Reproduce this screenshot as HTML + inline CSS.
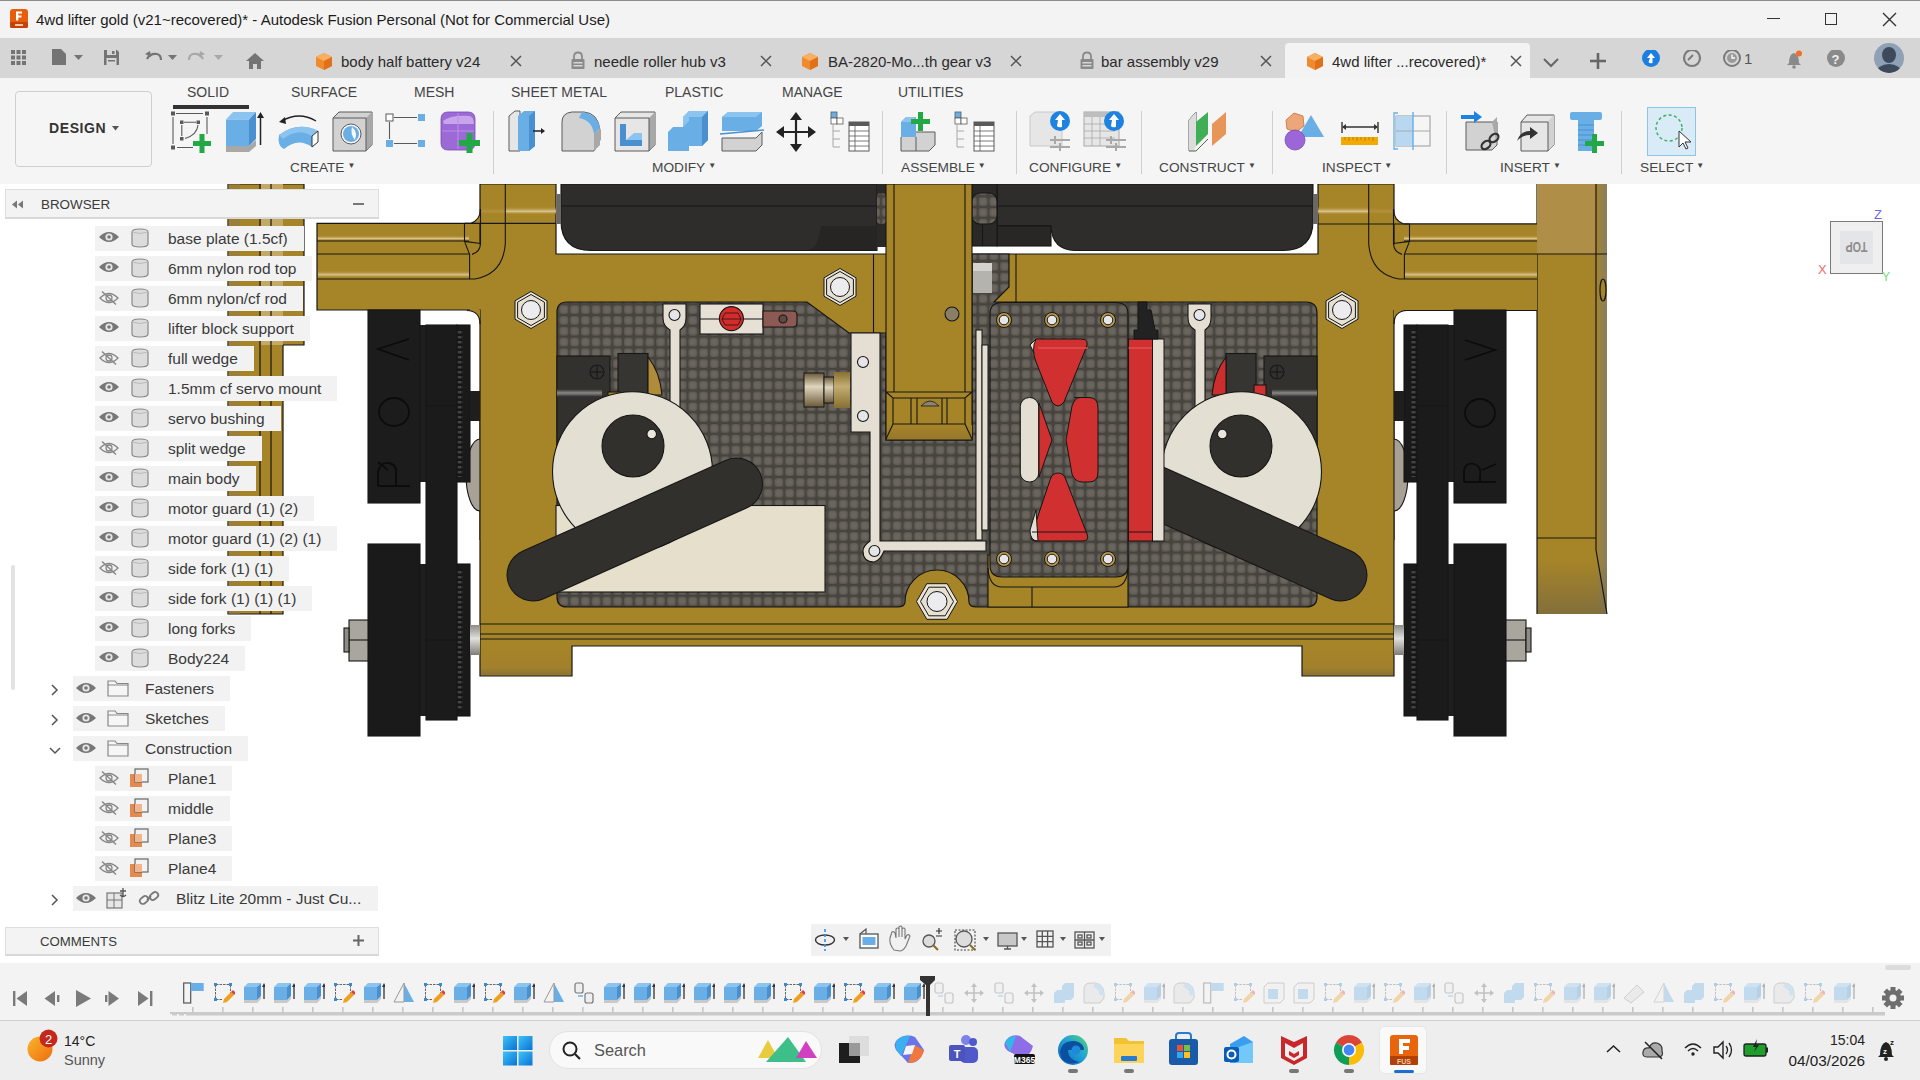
<!DOCTYPE html>
<html><head><meta charset="utf-8">
<style>
*{box-sizing:border-box}
html,body{margin:0;padding:0;width:1920px;height:1080px;overflow:hidden;background:#fff;font-family:"Liberation Sans",sans-serif;color:#333}
.a{position:absolute}
.t{position:absolute;white-space:nowrap;line-height:1}
</style></head><body>
<svg class="a" style="left:0;top:0" width="1920" height="1080" viewBox="0 0 1920 1080">
<defs>
<filter id="cfb" x="0" y="0" width="1" height="1"><feGaussianBlur stdDeviation="0.7"/></filter>
<pattern id="cf" x="10.2" y="1.8" width="10.75" height="10.8" patternUnits="userSpaceOnUse">
<rect width="10.75" height="10.8" fill="#47433e"/>
<rect x="0.9" y="0.9" width="9" height="9" rx="3" fill="#5c5851"/>
<rect x="1.8" y="1.8" width="7.2" height="7.2" rx="2.5" fill="#65615a"/>
<rect x="3" y="3" width="4.8" height="4.8" rx="1.8" fill="#6a665e"/>
</pattern>
<linearGradient id="tubeH" x1="0" y1="0" x2="0" y2="1">
<stop offset="0" stop-color="#a7842a"/><stop offset="0.55" stop-color="#a9872e"/><stop offset="0.8" stop-color="#d2b77a"/><stop offset="0.9" stop-color="#a68329"/><stop offset="1" stop-color="#9e7d27"/>
</linearGradient>
<linearGradient id="hl" x1="0" y1="0" x2="0" y2="1"><stop offset="0" stop-color="#a68428" stop-opacity="0"/><stop offset="0.6" stop-color="#dcc58e"/><stop offset="1" stop-color="#a68428" stop-opacity="0"/></linearGradient>
<linearGradient id="hlg" x1="0" y1="0" x2="0" y2="1"><stop offset="0" stop-color="#2c2b29"/><stop offset="0.5" stop-color="#8a8985"/><stop offset="1" stop-color="#2c2b29"/></linearGradient>
<pattern id="gear" x="0" y="0" width="6" height="5" patternUnits="userSpaceOnUse"><rect width="6" height="5" fill="#161616"/><rect x="0.5" y="1" width="5" height="2.4" fill="#444"/></pattern>
<linearGradient id="boxg" x1="0" y1="0" x2="0" y2="1"><stop offset="0" stop-color="#a68428"/><stop offset="1" stop-color="#96782c"/></linearGradient>
<linearGradient id="rpb" x1="0" y1="0" x2="0" y2="1"><stop offset="0" stop-color="#7a6a40" stop-opacity="0"/><stop offset="1" stop-color="#7a6a40" stop-opacity="0.8"/></linearGradient>
<linearGradient id="tubeV" x1="0" y1="0" x2="1" y2="0">
<stop offset="0" stop-color="#a4822a"/><stop offset="1" stop-color="#a68428"/>
</linearGradient>
<linearGradient id="footG" x1="0" y1="0" x2="0" y2="1">
<stop offset="0" stop-color="#a68428"/><stop offset="0.75" stop-color="#a2812b"/><stop offset="1" stop-color="#8b7236"/>
</linearGradient>
<linearGradient id="shaft" x1="0" y1="0" x2="0" y2="1">
<stop offset="0" stop-color="#8d8b86"/><stop offset="0.45" stop-color="#e0e0dc"/><stop offset="1" stop-color="#7f7d78"/>
</linearGradient>
<linearGradient id="rpanel" x1="0" y1="0" x2="1" y2="0">
<stop offset="0" stop-color="#a68428"/><stop offset="0.84" stop-color="#a68428"/><stop offset="0.86" stop-color="#a08434"/><stop offset="1" stop-color="#8c7d60"/>
</linearGradient>
<linearGradient id="pulley" x1="0" y1="0" x2="0" y2="1">
<stop offset="0" stop-color="#6b5a3a"/><stop offset="0.4" stop-color="#e0d6bd"/><stop offset="1" stop-color="#6b5a3a"/>
</linearGradient>
</defs>
<g stroke="#161616" stroke-width="1.2">
<!-- far left panel (under browser) -->
<path d="M228 184 H304 V345 H283 V614 H228 Z" fill="#a68428"/><rect x="261" y="184" width="22" height="161" fill="#c4a866" stroke="none"/><rect x="228" y="184" width="12" height="430" fill="#8f7a48" stroke="none" opacity="0.5"/>
<line x1="260" y1="184" x2="260" y2="614"/><line x1="271" y1="184" x2="271" y2="614"/>
<!-- left horizontal bar -->
<path d="M470.5 223.4 H317 V310 H470.5" fill="#a68428"/><rect x="470" y="223.4" width="14" height="87" fill="#a68428" stroke="none"/>
<rect x="318" y="235" width="151" height="6" fill="url(#hl)" stroke="none"/>
<rect x="318" y="270" width="151" height="8" fill="url(#hl)" stroke="none"/>
<line x1="317" y1="241" x2="469" y2="241"/><line x1="317" y1="254" x2="469" y2="254"/>
<!-- far right panel -->
<rect x="1537" y="184" width="70" height="430" fill="url(#rpanel)" stroke="none"/><rect x="1537" y="560" width="70" height="54" fill="url(#rpb)" stroke="none"/><path d="M1537 184 V614" fill="none"/>
<rect x="1537" y="184" width="59" height="70" fill="#af8f48" stroke="none"/>
<path d="M1596 184 V550 L1607 614 M1537 254 H1607 M1537 538 H1596" fill="none"/>
<ellipse cx="1603" cy="290" rx="3" ry="11" fill="#a68428"/>
<!-- right horizontal bar -->
<path d="M1537 224 H1403.5 M1403.5 310.5 H1537" fill="#a68428"/><rect x="1403.5" y="224" width="133.5" height="86.5" fill="#a68428" stroke="none"/><path d="M1403.5 224 H1537 M1403.5 310.5 H1537" fill="none"/><rect x="1390" y="224" width="14" height="87" fill="#a68428" stroke="none"/>
<rect x="1404" y="235" width="133" height="6" fill="url(#hl)" stroke="none"/>
<rect x="1404" y="270" width="133" height="8" fill="url(#hl)" stroke="none"/>
<line x1="1404" y1="241" x2="1537" y2="241"/><line x1="1404" y1="254" x2="1537" y2="254"/>
</g>
<!-- main frame body -->
<g stroke="#161616" stroke-width="1.2">
<path d="M480 184 H556 V254 H1318 V184 H1394 V676 H1302 V646 H572 V676 H480 Z" fill="#a68428"/>
</g>
<!-- inner carbon area -->
<path d="M567 302 H807 L849 333 H886 V440 H972 V254 H1009 V287 L994 302 H1306 Q1317 302 1317 313 V597 Q1317 607 1306 607 H977 Q969 607 969 602 A32 32 0 0 0 905 602 Q905 607 897 607 H567 Q557 607 557 597 V312 Q557 302 567 302 Z" fill="url(#cf)" stroke="#161616" stroke-width="1.2"/>
<path d="M466 310 H480 V324 Q480 310 466 310 Z" fill="#a68428"/>
<path d="M1408 310 H1394 V324 Q1394 310 1408 310 Z" fill="#a68428"/>
<path d="M480 324 Q480 311 467 310.5" fill="none" stroke="#161616" stroke-width="1.1"/>
<path d="M1394 324 Q1394 311 1407 310.5" fill="none" stroke="#161616" stroke-width="1.1"/>
<!-- top tubes -->
<g id="ltube" stroke="#161616" stroke-width="1.1">
<rect x="470.2" y="244.5" width="20" height="65" fill="#a68428" stroke="none"/>
<rect x="505" y="206" width="51" height="9" fill="url(#hl)" stroke="none"/><rect x="481" y="206" width="24" height="9" fill="url(#hl)" stroke="none" opacity="0.2"/>
<path d="M470.5 223.4 Q480.5 220 480.5 209 V223.4 Z" fill="#a68428" stroke="none"/>
<path d="M470.5 223.4 Q480.5 220 480.5 209" fill="none"/>
<path d="M505.3 184 V244 Q503 274 475 279 M464.5 223.4 H556 M480.5 209 V244 Q480 252 472 254.4 M464.5 223.4 V241.4 L480.5 243.5 M464.5 241.4 L469.6 254.4 V279 M317 279 H475" fill="none"/>
</g>
<g transform="translate(1874 0) scale(-1 1)" stroke="#161616" stroke-width="1.1">
<rect x="470.2" y="244.5" width="20" height="65.5" fill="#a68428" stroke="none"/>
<rect x="505" y="206" width="51" height="9" fill="url(#hl)" stroke="none"/><rect x="481" y="206" width="24" height="9" fill="url(#hl)" stroke="none" opacity="0.2"/>
<path d="M470.5 224 Q480.5 220 480.5 209 V224 Z" fill="#a68428" stroke="none"/>
<path d="M470.5 224 Q480.5 220 480.5 209" fill="none"/>
<path d="M505.3 184 V244 Q503 274 475 279 M464.5 224 H556 M480.5 209 V244 Q480 252 472 254.4 M464.5 224 V241.4 L480.5 243.5 M464.5 241.4 L469.6 254.4 V279 M337 279 H475" fill="none"/>
</g>
<!-- bottom bar lines -->
<g stroke="#161616" stroke-width="1.1">
<line x1="480" y1="624" x2="1394" y2="624"/>
<line x1="480" y1="634" x2="1394" y2="634"/>
<line x1="480" y1="639" x2="1394" y2="639"/>
</g>
<rect x="481" y="647" width="90" height="28" fill="url(#footG)"/>
<rect x="1303" y="647" width="90" height="28" fill="url(#footG)"/>
<!-- motors -->
<g stroke="#161616" stroke-width="1.1">
<path d="M561 184 H877 V250.5 H591 Q561 250.5 561 220.5 Z" fill="#2f2d2b"/><rect x="556.5" y="194" width="4.5" height="30" fill="#6a6865" stroke="none"/>
<line x1="561" y1="206" x2="877" y2="206"/>
<path d="M821 226 H877 V250 H808 Q818 248 821 226 Z" fill="#262523" stroke="none"/>
<path d="M997 184 H1313 V220.5 Q1313 250.5 1283 250.5 H1075 Q1052 250 1051 226 H997 Z" fill="#2f2d2b"/><rect x="997" y="226" width="54" height="20" fill="#282725"/><rect x="1313" y="194" width="4.5" height="30" fill="#6a6865" stroke="none"/>
<line x1="997" y1="206" x2="1313" y2="206"/>

<rect x="877" y="184" width="9" height="63" fill="#2a2927" stroke="none"/><rect x="877" y="193" width="9" height="31" rx="4" fill="url(#cf)" stroke="none"/>
<rect x="972" y="184" width="25" height="62" fill="#2a2927"/><line x1="982.5" y1="224" x2="982.5" y2="246"/><rect x="972" y="193" width="25" height="31" rx="8" fill="url(#cf)"/><rect x="973" y="263" width="19" height="30" fill="#b5b3ae" stroke="none"/><rect x="973" y="263" width="19" height="8" fill="#d4d2cd" stroke="none"/>
</g>
<line x1="873.5" y1="254" x2="873.5" y2="333" stroke="#161616" stroke-width="1.1"/><line x1="1016" y1="254" x2="1016" y2="302" stroke="#161616" stroke-width="1.1"/>
<!-- center column -->
<g stroke="#161616" stroke-width="1.1">
<rect x="886" y="184" width="86" height="256" fill="#a68428"/>
<line x1="894" y1="184" x2="894" y2="392"/><line x1="965" y1="184" x2="965" y2="392"/>
<rect x="887" y="425" width="85" height="14" fill="url(#boxg)" stroke="none"/>
<path d="M886 392 H972 M886 392 L893 398 H965 L972 392 M893 398 V424 H965 V398 M893 424 L886 439 M965 424 L972 439 M911 398 V424 M917 398 V424 M942 398 V424 M947 398 V424" fill="none"/>
<path d="M921 406 Q930 396 939 406 Z" fill="#8d8372" stroke-width="0.8"/>
<circle cx="952" cy="314" r="7" fill="#8a7f66"/>
</g>
<!-- hex nuts -->
<g stroke="#161616" stroke-width="1"><path d="M531.0,291.5 L547.0,300.8 L547.0,319.2 L531.0,328.5 L515.0,319.2 L515.0,300.8 Z" fill="#e9e4d6"/>
<path d="M531.0,294.5 L544.4,302.2 L544.4,317.8 L531.0,325.5 L517.6,317.8 L517.6,302.2 Z" fill="#e6e1d3"/>
<circle cx="531" cy="310" r="9.5" fill="#ececef"/>
<path d="M840.0,268.5 L856.0,277.8 L856.0,296.2 L840.0,305.5 L824.0,296.2 L824.0,277.8 Z" fill="#e9e4d6"/>
<path d="M840.0,271.5 L853.4,279.2 L853.4,294.8 L840.0,302.5 L826.6,294.8 L826.6,279.2 Z" fill="#e6e1d3"/>
<circle cx="840" cy="287" r="9.5" fill="#ececef"/>
<path d="M1342.0,291.5 L1358.0,300.8 L1358.0,319.2 L1342.0,328.5 L1326.0,319.2 L1326.0,300.8 Z" fill="#e9e4d6"/>
<path d="M1342.0,294.5 L1355.4,302.2 L1355.4,317.8 L1342.0,325.5 L1328.6,317.8 L1328.6,302.2 Z" fill="#e6e1d3"/>
<circle cx="1342" cy="310" r="9.5" fill="#ececef"/>
<path d="M957.5,601.5 L947.2,619.3 L926.8,619.3 L916.5,601.5 L926.8,583.7 L947.2,583.7 Z" fill="#e9e4d6"/>
<path d="M953.5,601.5 L945.2,615.8 L928.8,615.8 L920.5,601.5 L928.8,587.2 L945.2,587.2 Z" fill="#e6e1d3"/>
<circle cx="937" cy="601.5" r="10" fill="#ececef"/></g><g stroke="#161616" stroke-width="1.1">
<!-- left wheels -->
<rect x="420" y="325" width="6" height="157" fill="#1e1e1e" stroke="none"/>
<rect x="420" y="564" width="6" height="152" fill="#1e1e1e" stroke="none"/>
<ellipse cx="480" cy="475" rx="14" ry="36" fill="#a7a295"/>
<rect x="457" y="325" width="13" height="157" fill="#1a1a1a"/>
<rect x="457" y="564" width="13" height="152" fill="#1a1a1a"/>
<rect x="457.5" y="330" width="5" height="147" fill="url(#gear)" stroke="none"/>
<rect x="457.5" y="569" width="5" height="142" fill="url(#gear)" stroke="none"/>
<rect x="426" y="325" width="31" height="395" fill="#1b1b1b"/>
<line x1="426" y1="406" x2="457" y2="406"/><line x1="426" y1="640" x2="457" y2="640"/>
<rect x="368" y="310" width="52" height="193" fill="#1c1c1c"/>
<rect x="368" y="544" width="52" height="192" fill="#1a1a1a"/>
<rect x="470" y="625" width="10" height="30" fill="url(#shaft)" stroke="none"/><rect x="470" y="391" width="10" height="30" fill="#1e1e1e" stroke="none"/>
<rect x="349" y="620" width="19" height="41" fill="#a9a69d"/>
<line x1="349" y1="640" x2="368" y2="640"/>
<rect x="344" y="628" width="5" height="24" fill="#8f8c86"/>

<!-- right wheels -->
<rect x="1448" y="325" width="6" height="157" fill="#1e1e1e" stroke="none"/>
<rect x="1448" y="564" width="6" height="152" fill="#1e1e1e" stroke="none"/>
<ellipse cx="1394" cy="475" rx="14" ry="36" fill="#a7a295"/>
<rect x="1404" y="325" width="13" height="157" fill="#1a1a1a"/>
<rect x="1404" y="564" width="13" height="152" fill="#1a1a1a"/>
<rect x="1411.5" y="330" width="5" height="147" fill="url(#gear)" stroke="none"/>
<rect x="1411.5" y="569" width="5" height="142" fill="url(#gear)" stroke="none"/>
<rect x="1417" y="325" width="31" height="395" fill="#1b1b1b"/>
<line x1="1417" y1="406" x2="1448" y2="406"/><line x1="1417" y1="640" x2="1448" y2="640"/>
<rect x="1454" y="310" width="52" height="193" fill="#1c1c1c"/>
<rect x="1454" y="544" width="52" height="192" fill="#1a1a1a"/>
<rect x="1394" y="625" width="10" height="30" fill="url(#shaft)" stroke="none"/><rect x="1394" y="391" width="10" height="30" fill="#1e1e1e" stroke="none"/>
<rect x="1506" y="620" width="20" height="41" fill="#a9a69d"/>
<line x1="1506" y1="640" x2="1526" y2="640"/>
<rect x="1526" y="628" width="5" height="24" fill="#8f8c86"/>
</g>
<g fill="none" stroke="#0c0c0c" stroke-width="1.8">
<path d="M409 339 L378 349 L409 360"/><ellipse cx="394" cy="412" rx="15" ry="14"/><path d="M378 486 H410 M378 486 V472 Q380 462 389 463 Q398 465 396 476 V486 M388 470 L378 462"/>
<path d="M1465 340 L1495 350 L1465 360"/><ellipse cx="1480" cy="413" rx="15" ry="14"/><path d="M1496 482 H1464 M1464 482 V470 Q1466 462 1474 464 Q1482 466 1480 476 V482 M1482 470 L1496 464"/>
</g>
<!-- re-draw gold column edges over discs -->
<g stroke="#161616" stroke-width="1.1">
<rect x="480" y="420" width="20" height="120" fill="#a68428" stroke="none"/>
<line x1="480" y1="420" x2="480" y2="540"/>
<rect x="1374" y="420" width="20" height="120" fill="#a68428" stroke="none"/>
<line x1="1394" y1="420" x2="1394" y2="540"/>
</g>
<!-- servo blocks -->
<g stroke="#161616" stroke-width="1.1">
<rect x="557" y="356" width="53" height="96" fill="#32312e"/>
<rect x="557" y="389" width="45" height="8" fill="url(#hlg)" stroke="none"/>
<circle cx="597" cy="372" r="7" fill="none"/>
<line x1="597" y1="366" x2="597" y2="378"/><line x1="591" y1="372" x2="603" y2="372"/>
<rect x="618" y="353.5" width="30" height="40" fill="#363532"/>
<path d="M648 357 Q660 372 662 395 L648 395 Z" fill="#b08c3a"/>
<rect x="608" y="392" width="12" height="25" fill="#a68428"/>
<rect x="1264" y="356" width="53" height="96" fill="#32312e"/>
<rect x="1272" y="389" width="45" height="8" fill="url(#hlg)" stroke="none"/>
<circle cx="1277" cy="372" r="7" fill="none"/>
<line x1="1277" y1="366" x2="1277" y2="378"/><line x1="1271" y1="372" x2="1283" y2="372"/>
<rect x="1226" y="353.5" width="30" height="40" fill="#363532"/>
<path d="M1226 357 Q1214 372 1212 395 L1226 395 Z" fill="#cc2d2d"/>
<rect x="1254" y="385" width="12" height="25" fill="#d03030"/>
</g>
<!-- servo arms (white thin) -->
<g stroke="#161616" stroke-width="1.1" fill="#e4dfd2">
<path d="M663 304 H686 V318 Q686 326 680 330 V420 H670 V330 Q663 326 663 318 Z"/>
<circle cx="674.5" cy="315" r="5.5" fill="#e6e6ea"/>
<path d="M1188 304 H1211 V318 Q1211 326 1205 330 V420 H1195 V330 Q1188 326 1188 318 Z"/>
<circle cx="1199.5" cy="315" r="5.5" fill="#e6e6ea"/>
</g>
<!-- cream rect left -->
<rect x="556" y="505.5" width="269" height="86.5" fill="#e5dfcc" stroke="#161616" stroke-width="1.1"/>
<!-- cam discs -->
<g stroke="#161616" stroke-width="1.1">
<circle cx="632.5" cy="471.7" r="80" fill="#e3dfd2"/>
<circle cx="633" cy="446" r="31" fill="#31302c"/>
<circle cx="651.7" cy="434" r="4.8" fill="#e9e6dc"/>
<circle cx="1241.5" cy="471.7" r="80" fill="#e3dfd2"/>
<circle cx="1241" cy="446" r="31" fill="#31302c"/>
<circle cx="1222.3" cy="434" r="4.8" fill="#e9e6dc"/>
</g>
<!-- arms -->
<g stroke="#161616" stroke-width="53" stroke-linecap="round">
<line x1="533" y1="575" x2="736.5" y2="484"/>
<line x1="1341" y1="575" x2="1137.5" y2="484"/>
</g>
<g stroke="#31302c" stroke-width="51" stroke-linecap="round">
<line x1="533" y1="575" x2="736.5" y2="484"/>
<line x1="1341" y1="575" x2="1137.5" y2="484"/>
</g>
<!-- red screw block -->
<g stroke="#161616" stroke-width="1.1">
<rect x="700" y="304" width="63" height="30" fill="#e6e1d4"/>
<line x1="700" y1="319" x2="763" y2="319"/>
<path d="M763 311 H793 Q797 311 797 315 V323 Q797 327 793 327 H763 Z" fill="#8c5a52"/>
<circle cx="783" cy="319" r="4" fill="#5d4a45"/>
<circle cx="731.4" cy="318.6" r="12" fill="#d52b2b"/>
<path d="M725 313 H738 L741 319 L738 325 H725 L722 319 Z M722 319 H741" fill="none" stroke-width="0.8"/>
</g>
<!-- pulley -->
<g stroke="#161616" stroke-width="1">
<rect x="804" y="373" width="20" height="34" fill="url(#pulley)"/>
<rect x="824" y="377" width="10" height="26" fill="url(#pulley)"/>
<rect x="834" y="372" width="16" height="36" fill="#a68428" stroke="none"/>
<rect x="834" y="372" width="16" height="36" fill="url(#pulley)" opacity="0.5" stroke="none"/>
</g>
<!-- white L bracket -->
<g stroke="#161616" stroke-width="1.1" fill="#e4dfd2">
<path d="M851 333 H880 V541 H986 V551 H884 Q880 561 874 562 Q863 562 863 551 Q863 546 870 541 V432 H851 Z"/>
<circle cx="863" cy="362" r="5.5" fill="#e6e6ea"/>
<circle cx="863" cy="416" r="5.5" fill="#e6e6ea"/>
<circle cx="874.4" cy="551" r="5.5" fill="#e6e6ea"/>
</g>
<!-- strip left of battery -->
<g stroke="#161616" stroke-width="1" fill="#e4dfd2">
<rect x="976" y="330" width="6" height="210"/>
<rect x="982" y="345" width="6" height="185"/>
</g>
<!-- battery plate -->
<g stroke="#161616" stroke-width="1.1">
<path d="M988 555 H1128 V607 H988 Z" fill="#a68428"/>
<path d="M988 568 Q989 587 1002 587 H1114 Q1127 587 1128 568 M1032 587 V607" fill="none"/>
<path d="M1002 302.5 H1116 Q1128 302.5 1128 314 V565 Q1128 577 1116 577 H1002 Q990 577 990 565 V314 Q990 302.5 1002 302.5 Z" fill="url(#cf)"/>
</g>
<g stroke="#161616" stroke-width="1">
<circle cx="1004" cy="320" r="7.5" fill="#b89a4c"/><circle cx="1004" cy="320" r="4.8" fill="#e6e6ea"/>
<circle cx="1052" cy="320" r="7.5" fill="#b89a4c"/><circle cx="1052" cy="320" r="4.8" fill="#e6e6ea"/>
<circle cx="1108" cy="320" r="7.5" fill="#b89a4c"/><circle cx="1108" cy="320" r="4.8" fill="#e6e6ea"/>
<circle cx="1004" cy="559" r="7.5" fill="#b89a4c"/><circle cx="1004" cy="559" r="4.8" fill="#e6e6ea"/>
<circle cx="1052" cy="559" r="7.5" fill="#b89a4c"/><circle cx="1052" cy="559" r="4.8" fill="#e6e6ea"/>
<circle cx="1108" cy="559" r="7.5" fill="#b89a4c"/><circle cx="1108" cy="559" r="4.8" fill="#e6e6ea"/>
<!-- red shapes -->
<path d="M1036 339 L1030 345 L1036 357 Z" fill="#e4dfd2"/>
<path d="M1036 339 H1081 Q1090 339 1086 348 L1064 402 Q1058 410 1052 402 L1036 362 Q1031 349 1036 339 Z" fill="#d03030"/>
<line x1="1038" y1="348" x2="1088" y2="348" stroke="#e05050" stroke-width="1.5"/>
<rect x="1020.3" y="397.5" width="18.4" height="84.5" rx="9" fill="#e4dfd2"/>
<path d="M1039 403 L1052 440 L1039 477 Z" fill="#d03030"/>
<path d="M1074 397.5 H1089 Q1098 397.5 1098 408 V472 Q1098 482 1089 482 H1082 Q1075 482 1072 474 L1066 440 L1072 406 Q1075 397.5 1080 397.5 Z" fill="#d03030"/>
<path d="M1058 473 Q1064 473 1066 480 L1087 534 Q1090 541 1082 541 H1036 Q1029 541 1032 534 L1050 480 Q1052 473 1058 473 Z" fill="#d03030"/>
<path d="M1036 510 L1030 530 Q1030 541 1038 541 Z" fill="#e4dfd2"/>
<line x1="1032" y1="532" x2="1087" y2="532"/>
<rect x="1128.5" y="339" width="24" height="202" fill="#d03030"/>
<line x1="1128.5" y1="348" x2="1152.5" y2="348" stroke="#e05050" stroke-width="1.5"/>
<line x1="1128.5" y1="532" x2="1152.5" y2="532"/>
<rect x="1152.5" y="339" width="11.5" height="202" fill="#e4dfd2"/>
<path d="M1138 302 H1147 V310 H1151 L1155 330 H1158 V339 H1134 V330 H1138 Z" fill="#222"/>
</g>

</svg>

<div class="a" style="left:0;top:0;width:1920px;height:38px;background:#f3f3f3"></div>
<div class="a" style="left:0;top:0;width:1920px;height:1px;background:#8c8c8c"></div>
<svg class="a" style="left:9px;top:8px" width="20" height="22" viewBox="0 0 20 22">
<rect x="1" y="1" width="18" height="19" rx="3" fill="#e85d0c"/><rect x="1" y="14" width="18" height="6" rx="1.5" fill="#c2440a"/>
<path d="M7 3.5 H13 V5.5 H9.3 V7.5 H12.5 V9.4 H9.3 V12.5 H7 Z" fill="#fff"/>
<rect x="6" y="16" width="8" height="2" fill="#f7c7a0"/></svg>
<div class="t" style="left:36px;top:12px;font-size:15px;color:#1b1b1b;font-weight:normal;letter-spacing:0px;">4wd lifter gold (v21~recovered)* - Autodesk Fusion Personal (Not for Commercial Use)</div>
<div class="a" style="left:1767px;top:18px;width:13px;height:1px;background:#333"></div>
<div class="a" style="left:1825px;top:13px;width:12px;height:12px;border:1.3px solid #333"></div>
<svg class="a" style="left:1882px;top:12px" width="15" height="15" viewBox="0 0 15 15"><path d="M1 1 L14 14 M14 1 L1 14" stroke="#333" stroke-width="1.4"/></svg>
<div class="a" style="left:0;top:38px;width:1920px;height:40px;background:#d6d6d6"></div>
<div class="a" style="left:1285px;top:43px;width:245px;height:35px;background:#f3f3f3;border-radius:4px 4px 0 0"></div>
<svg class="a" style="left:0;top:38px" width="290" height="40" viewBox="0 0 290 40">
<g fill="#747474">
<rect x="11" y="12" width="4" height="4"/><rect x="16.5" y="12" width="4" height="4"/><rect x="22" y="12" width="4" height="4"/>
<rect x="11" y="17.5" width="4" height="4"/><rect x="16.5" y="17.5" width="4" height="4"/><rect x="22" y="17.5" width="4" height="4"/>
<rect x="11" y="23" width="4" height="4"/><rect x="16.5" y="23" width="4" height="4"/><rect x="22" y="23" width="4" height="4"/>
<path d="M52 11 H61 L66 16 V27 H52 Z"/>
<path d="M74 17 H83 L78.5 22 Z"/>
<path d="M104 12 H117 L119 14 V27 H104 Z"/><rect x="107" y="12" width="9" height="5" fill="#d6d6d6"/><rect x="112" y="13" width="2.5" height="3" fill="#747474"/><rect x="106.5" y="20" width="10" height="7" fill="#d6d6d6"/><rect x="108" y="22" width="7" height="1.5" fill="#747474"/>
<path d="M168 17 H177 L172.5 22 Z"/>
<path d="M214 17 H223 L218.5 22 Z" fill="#a8a8a8"/>
<path d="M246 23 L255 15 L264 23 H261 V31 H257 V26 H253 V31 H249 V23 Z"/>
</g>
<path d="M147 21 Q150 15 157 16 Q161 17 161 22" fill="none" stroke="#747474" stroke-width="2.2"/>
<path d="M145 16 L150 13 L151 19 Z" fill="#747474"/>
<path d="M203 21 Q200 15 193 16 Q189 17 189 22" fill="none" stroke="#a8a8a8" stroke-width="2.2"/>
<path d="M205 16 L200 13 L199 19 Z" fill="#a8a8a8"/>
</svg>
<svg class="a" style="left:315px;top:52px" width="18" height="19" viewBox="0 0 18 19">
<path d="M9 1 L17 5 V14 L9 18 L1 14 V5 Z" fill="#f08a2c"/><path d="M9 1 L17 5 L9 9 L1 5 Z" fill="#f7b061"/><path d="M9 9 L17 5 V14 L9 18 Z" fill="#e0701a"/></svg>
<div class="t" style="left:341px;top:54px;font-size:15px;color:#2a2a2a;font-weight:normal;letter-spacing:0px;">body half battery v24</div>
<svg class="a" style="left:510px;top:55px" width="12" height="12" viewBox="0 0 12 12"><path d="M1 1 L11 11 M11 1 L1 11" stroke="#555" stroke-width="1.5"/></svg>
<svg class="a" style="left:570px;top:51px" width="16" height="19" viewBox="0 0 16 19">
<path d="M4 8 V5.5 Q4 1.5 8 1.5 Q12 1.5 12 5.5 V8" fill="none" stroke="#8a8a8a" stroke-width="1.8"/>
<rect x="1.5" y="8" width="13" height="10" rx="1" fill="#8a8a8a"/><rect x="3.5" y="11" width="9" height="1.5" fill="#d6d6d6"/><rect x="3.5" y="14" width="9" height="1.5" fill="#d6d6d6"/></svg>
<div class="t" style="left:594px;top:54px;font-size:15px;color:#2a2a2a;font-weight:normal;letter-spacing:0px;">needle roller hub v3</div>
<svg class="a" style="left:760px;top:55px" width="12" height="12" viewBox="0 0 12 12"><path d="M1 1 L11 11 M11 1 L1 11" stroke="#555" stroke-width="1.5"/></svg>
<svg class="a" style="left:801px;top:52px" width="18" height="19" viewBox="0 0 18 19">
<path d="M9 1 L17 5 V14 L9 18 L1 14 V5 Z" fill="#f08a2c"/><path d="M9 1 L17 5 L9 9 L1 5 Z" fill="#f7b061"/><path d="M9 9 L17 5 V14 L9 18 Z" fill="#e0701a"/></svg>
<div class="t" style="left:828px;top:54px;font-size:15px;color:#2a2a2a;font-weight:normal;letter-spacing:0px;">BA-2820-Mo...th gear v3</div>
<svg class="a" style="left:1010px;top:55px" width="12" height="12" viewBox="0 0 12 12"><path d="M1 1 L11 11 M11 1 L1 11" stroke="#555" stroke-width="1.5"/></svg>
<svg class="a" style="left:1079px;top:51px" width="16" height="19" viewBox="0 0 16 19">
<path d="M4 8 V5.5 Q4 1.5 8 1.5 Q12 1.5 12 5.5 V8" fill="none" stroke="#8a8a8a" stroke-width="1.8"/>
<rect x="1.5" y="8" width="13" height="10" rx="1" fill="#8a8a8a"/><rect x="3.5" y="11" width="9" height="1.5" fill="#d6d6d6"/><rect x="3.5" y="14" width="9" height="1.5" fill="#d6d6d6"/></svg>
<div class="t" style="left:1101px;top:54px;font-size:15px;color:#2a2a2a;font-weight:normal;letter-spacing:0px;">bar assembly v29</div>
<svg class="a" style="left:1260px;top:55px" width="12" height="12" viewBox="0 0 12 12"><path d="M1 1 L11 11 M11 1 L1 11" stroke="#555" stroke-width="1.5"/></svg>
<svg class="a" style="left:1306px;top:52px" width="18" height="19" viewBox="0 0 18 19">
<path d="M9 1 L17 5 V14 L9 18 L1 14 V5 Z" fill="#f08a2c"/><path d="M9 1 L17 5 L9 9 L1 5 Z" fill="#f7b061"/><path d="M9 9 L17 5 V14 L9 18 Z" fill="#e0701a"/></svg>
<div class="t" style="left:1332px;top:54px;font-size:15px;color:#2a2a2a;font-weight:normal;letter-spacing:0px;">4wd lifter ...recovered)*</div>
<svg class="a" style="left:1510px;top:55px" width="12" height="12" viewBox="0 0 12 12"><path d="M1 1 L11 11 M11 1 L1 11" stroke="#555" stroke-width="1.5"/></svg>
<svg class="a" style="left:1540px;top:50px" width="360" height="24" viewBox="0 0 360 24">
<path d="M4 9 L11 16 L18 9" fill="none" stroke="#666" stroke-width="2"/>
<path d="M58 3 V19 M50 11 H66" stroke="#666" stroke-width="2.6"/>
<circle cx="111" cy="8" r="9" fill="#1c7fe0"/><path d="M111 3 L115 8 H112.5 V13 Q110 14 108.5 12 L110 8 H107 Z" fill="#fff"/>
<circle cx="152" cy="8" r="8" fill="none" stroke="#7a7a7a" stroke-width="2.2"/><path d="M148 10 L153 5" stroke="#7a7a7a" stroke-width="2"/>
<circle cx="192" cy="8" r="8" fill="none" stroke="#7a7a7a" stroke-width="2"/><circle cx="192" cy="8" r="5" fill="#9a9a9a"/><path d="M192 4.5 V8 H195" stroke="#fff" stroke-width="1.3" fill="none"/>
<text x="204" y="14" font-family="Liberation Sans" font-size="15" fill="#555">1</text>
<path d="M249 13 Q249 4 254 3 Q259 4 259 13 L261 15 H247 Z" fill="#8a8a8a"/><circle cx="254" cy="17" r="1.8" fill="#8a8a8a"/><circle cx="259" cy="3.5" r="3" fill="#f0702a"/>
<circle cx="296" cy="8" r="9" fill="#8a8a8a"/><text x="291.5" y="13.5" font-family="Liberation Sans" font-size="13" font-weight="bold" fill="#f0f0f0">?</text>
</svg>
<svg class="a" style="left:1873px;top:42px" width="32" height="32" viewBox="0 0 32 32"><defs><clipPath id="av"><circle cx="16" cy="16" r="15"/></clipPath></defs>
<circle cx="16" cy="16" r="15" fill="#8fa1b5"/><g clip-path="url(#av)"><ellipse cx="16" cy="13" rx="7" ry="8" fill="#3c4a5c"/><ellipse cx="16" cy="31" rx="13" ry="9" fill="#3c4a5c"/></g></svg>
<div class="a" style="left:0;top:78px;width:1920px;height:106px;background:#f5f5f5"></div>
<div class="a" style="left:15px;top:91px;width:137px;height:76px;border:1px solid #cfcfcf;border-radius:4px;background:#f5f5f5"></div>
<div class="t" style="left:49px;top:121px;font-size:14px;color:#333;font-weight:bold;letter-spacing:0.6px;">DESIGN</div>
<svg class="a" style="left:112px;top:126px" width="8" height="5" viewBox="0 0 8 5"><path d="M0 0 H7 L3.5 4.5 Z" fill="#555"/></svg>
<div class="t" style="left:187px;top:85px;font-size:14px;color:#444;font-weight:normal;letter-spacing:0px;">SOLID</div>
<div class="t" style="left:291px;top:85px;font-size:14px;color:#444;font-weight:normal;letter-spacing:0px;">SURFACE</div>
<div class="t" style="left:414px;top:85px;font-size:14px;color:#444;font-weight:normal;letter-spacing:0px;">MESH</div>
<div class="t" style="left:511px;top:85px;font-size:14px;color:#444;font-weight:normal;letter-spacing:0px;">SHEET METAL</div>
<div class="t" style="left:665px;top:85px;font-size:14px;color:#444;font-weight:normal;letter-spacing:0px;">PLASTIC</div>
<div class="t" style="left:782px;top:85px;font-size:14px;color:#444;font-weight:normal;letter-spacing:0px;">MANAGE</div>
<div class="t" style="left:898px;top:85px;font-size:14px;color:#444;font-weight:normal;letter-spacing:0px;">UTILITIES</div>
<div class="a" style="left:173px;top:105px;width:76px;height:4px;background:#333"></div>
<div class="t" style="left:290px;top:161px;font-size:13.7px;color:#444;font-weight:normal;letter-spacing:0px;">CREATE<span style="font-size:8px;vertical-align:4px;margin-left:3px">&#9660;</span></div>
<div class="t" style="left:652px;top:161px;font-size:13.7px;color:#444;font-weight:normal;letter-spacing:0px;">MODIFY<span style="font-size:8px;vertical-align:4px;margin-left:3px">&#9660;</span></div>
<div class="t" style="left:901px;top:161px;font-size:13.7px;color:#444;font-weight:normal;letter-spacing:0px;">ASSEMBLE<span style="font-size:8px;vertical-align:4px;margin-left:3px">&#9660;</span></div>
<div class="t" style="left:1029px;top:161px;font-size:13.7px;color:#444;font-weight:normal;letter-spacing:0px;">CONFIGURE<span style="font-size:8px;vertical-align:4px;margin-left:3px">&#9660;</span></div>
<div class="t" style="left:1159px;top:161px;font-size:13.7px;color:#444;font-weight:normal;letter-spacing:0px;">CONSTRUCT<span style="font-size:8px;vertical-align:4px;margin-left:3px">&#9660;</span></div>
<div class="t" style="left:1322px;top:161px;font-size:13.7px;color:#444;font-weight:normal;letter-spacing:0px;">INSPECT<span style="font-size:8px;vertical-align:4px;margin-left:3px">&#9660;</span></div>
<div class="t" style="left:1500px;top:161px;font-size:13.7px;color:#444;font-weight:normal;letter-spacing:0px;">INSERT<span style="font-size:8px;vertical-align:4px;margin-left:3px">&#9660;</span></div>
<div class="t" style="left:1640px;top:161px;font-size:13.7px;color:#444;font-weight:normal;letter-spacing:0px;">SELECT<span style="font-size:8px;vertical-align:4px;margin-left:3px">&#9660;</span></div>
<div class="a" style="left:493px;top:111px;width:1px;height:63px;background:#cfcfcf"></div>
<div class="a" style="left:882px;top:111px;width:1px;height:63px;background:#cfcfcf"></div>
<div class="a" style="left:1016px;top:111px;width:1px;height:63px;background:#cfcfcf"></div>
<div class="a" style="left:1141px;top:111px;width:1px;height:63px;background:#cfcfcf"></div>
<div class="a" style="left:1272px;top:111px;width:1px;height:63px;background:#cfcfcf"></div>
<div class="a" style="left:1446px;top:111px;width:1px;height:63px;background:#cfcfcf"></div>
<div class="a" style="left:1621px;top:111px;width:1px;height:63px;background:#cfcfcf"></div>
<div class="a" style="left:1647px;top:107px;width:49px;height:49px;background:#d9ebf6;border:1px solid #8ec4e6"></div>
<svg class="a" style="left:0;top:100px" width="1920" height="62" viewBox="0 100 1920 62">
<g fill="#5a5a5a"><rect x="171" y="111.5" width="4" height="4"/><rect x="205" y="111.5" width="4" height="4"/><rect x="171" y="145.5" width="4" height="4"/><rect x="180" y="120.5" width="3.5" height="3.5"/><rect x="196.5" y="120.5" width="3.5" height="3.5"/><rect x="180" y="137" width="3.5" height="3.5"/></g><path d="M176 113.5 H203 M173 117 V144 M177 147.5 H193 M207 117 V134 M184 122.3 H196 M181.8 125 V136 M185 138.5 Q197 135 198 125" fill="none" stroke="#5a5a5a" stroke-width="1.1"/><path d="M199.5 134 H204.5 V141 H211 V146 H204.5 V153 H199.5 V146 H193 V141 H199.5 Z" fill="#22a844"/>
<path d="M226 146 H249 L256 140 V146 L249 152 H226 Z" fill="#a8a8a8"/><path d="M226 119.5 L233 112 H256 L249 119.5 Z" fill="#8cc4f0"/><rect x="226" y="119.5" width="23" height="26.5" fill="#6aaee6"/><path d="M249 119.5 L256 112 V139 L249 146 Z" fill="#4a90d0"/><path d="M260.5 145 V116" stroke="#222" stroke-width="1.5"/><path d="M257 118 L260.5 112 L264 118 Z" fill="#222"/>
<path d="M279 135 Q298 121 318 131 V142 L312 147 Q298 137 284 149 Q277 146 279 135 Z" fill="#6aaee6"/><path d="M279 135 Q298 121 318 131 L312 136 Q298 127 283 139 Z" fill="#8cc4f0"/><path d="M312 136 L318 131 V142 L312 147 Z" fill="#fff" stroke="#333" stroke-width="1"/><path d="M316 121 Q299 111 282 121" fill="none" stroke="#222" stroke-width="1.4"/><path d="M279 122 L285 117 L286 124 Z" fill="#222"/>
<path d="M333 151 V118 L339 112 H372 V145 L366 151 Z" fill="#d2d2d2" stroke="#5a5a5a" stroke-width="1"/><path d="M366 118 L372 112 V145 L366 151 Z" fill="#a8a8a8"/><path d="M333 118 H366 V151" fill="none" stroke="#5a5a5a" stroke-width="1"/><circle cx="351" cy="134" r="10" fill="#fafafa" stroke="#5a5a5a" stroke-width="1"/><circle cx="351" cy="134" r="8" fill="#6aaee6"/><path d="M352 127 Q358 132 355 140 Q350 134 352 127 Z" fill="#fafafa"/>
<rect x="386" y="114" width="7" height="7" fill="#fff" stroke="#5a5a5a"/><rect x="418" y="114" width="7" height="7" fill="#6aaee6"/><rect x="386" y="140" width="7" height="7" fill="#6aaee6"/><rect x="418" y="140" width="7" height="7" fill="#6aaee6"/><path d="M394 117.5 H417 M389.5 122 V139 M394 143.5 H417" stroke="#5a5a5a" stroke-width="1.1"/>
<path d="M441 119 Q441 112 448 112 H468 Q475 112 475 119 V143 Q475 150 468 150 H448 Q441 150 441 143 Z" fill="#9c6ad6" stroke="#7a4ab8" stroke-width="0.8"/><path d="M443 121 Q450 115 470 116 Q474 118 474 124 H444 Z" fill="#c8a4ec"/><path d="M458 113 V149 M442 131 H474" stroke="#b890e8" stroke-width="1"/><path d="M466.5 133 H472.5 V140 H480 V146 H472.5 V153 H466.5 V146 H459 V140 H466.5 Z" fill="#22a844"/>
<path d="M509 151 V116 L515 111 H520 V151 Z" fill="#e6e6e6" stroke="#5a5a5a" stroke-width="1"/><path d="M518 151 V116 L524 111 H535 V146 L529 151 Z" fill="#6aaee6"/><path d="M529 116 L535 111 V146 L529 151 Z" fill="#4a90d0"/><path d="M533 131 H542" stroke="#222" stroke-width="1.5"/><path d="M541 128 L545 131 L541 134 Z" fill="#222"/>
<path d="M562 151 V122 Q562 113 572 112 H584 Q598 113 600 130 V140 L594 151 Z" fill="#d2d2d2" stroke="#5a5a5a" stroke-width="1"/><path d="M582 112 Q597 114 600 128 L594 134 Q592 120 579 118 Z" fill="#6aaee6"/><path d="M594 134 V151 L600 145 V128 Z" fill="#a8a8a8"/>
<path d="M615 151 V118 L621 112 H655 V145 L649 151 Z" fill="#e6e6e6" stroke="#5a5a5a" stroke-width="1"/><path d="M649 118 L655 112 V145 L649 151 Z" fill="#a8a8a8"/><path d="M615 118 H649 V151" fill="none" stroke="#5a5a5a"/><path d="M620 124 H626 V140 H642 V146 H620 Z" fill="#4a90d0"/><path d="M626 140 L634 133 H642 V140 Z" fill="#8cc4f0"/>
<path d="M668 151 V132 L673 127 H683 V117 L689 111 H708 V140 L702 146 H689 V151 Z" fill="#6aaee6"/><path d="M683 127 L689 121 V117 L683 117 Z" fill="#8cc4f0"/><path d="M689 111 H708 L702 117 H683 Z" fill="#8cc4f0"/><path d="M702 117 L708 111 V140 L702 146 Z" fill="#4a90d0"/>
<path d="M722 151 V138 H756 L762 132 V145 L756 151 Z" fill="#d2d2d2" stroke="#5a5a5a" stroke-width="1"/><path d="M722 131 V117 L728 112 H762 V126 L756 131 Z" fill="#6aaee6"/><path d="M728 112 H762 L756 117 H722 Z" fill="#8cc4f0"/><path d="M720 134 L764 130" stroke="#4a90d0" stroke-width="1.6"/>
<path d="M796 114 V150 M778 132 H814" stroke="#222" stroke-width="2.2"/><path d="M790 120 L796 112 L802 120 Z M790 144 L796 152 L802 144 Z M784 126 L776 132 L784 138 Z M808 126 L816 132 L808 138 Z" fill="#222"/>
<rect x="831" y="112" width="6" height="6" fill="#6aaee6" stroke="#5a5a5a" stroke-width="0.8"/><rect x="831" y="118" width="6" height="6" fill="#fff" stroke="#5a5a5a" stroke-width="0.8"/><rect x="837" y="118" width="6" height="6" fill="#fff" stroke="#5a5a5a" stroke-width="0.8"/><path d="M833 124 V147 H840 M833 131 H840 M833 139 H840" stroke="#a8a8a8" stroke-width="1" fill="none"/><rect x="849" y="122" width="20" height="29" fill="#fff" stroke="#5a5a5a" stroke-width="1"/><rect x="849" y="122" width="20" height="4" fill="#5a5a5a"/><path d="M849 131 H869 M849 136 H869 M849 141 H869 M849 146 H869 M855 126 V151" stroke="#5a5a5a" stroke-width="0.8"/>
<path d="M901 151 V137 L906 132 H935 V145 L929 151 Z" fill="#d2d2d2" stroke="#5a5a5a" stroke-width="1"/><path d="M916 137 V151" stroke="#5a5a5a"/><path d="M901 137 V122 L906 117 H916 V137 Z" fill="#6aaee6"/><path d="M906 117 H916 L911 122 H901 Z" fill="#8cc4f0"/><path d="M918 112 H923 V119 H930 V124 H923 V131 H918 V124 H911 V119 H918 Z" fill="#22a844"/>
<rect x="955" y="112" width="6" height="6" fill="#6aaee6" stroke="#5a5a5a" stroke-width="0.8"/><rect x="955" y="118" width="6" height="6" fill="#fff" stroke="#5a5a5a" stroke-width="0.8"/><rect x="961" y="118" width="6" height="6" fill="#fff" stroke="#5a5a5a" stroke-width="0.8"/><path d="M957 124 V147 H964 M957 131 H964 M957 139 H964" stroke="#a8a8a8" stroke-width="1" fill="none"/><rect x="974" y="122" width="20" height="29" fill="#fff" stroke="#5a5a5a" stroke-width="1"/><rect x="974" y="122" width="20" height="4" fill="#5a5a5a"/><path d="M974 131 H994 M974 136 H994 M974 141 H994 M974 146 H994 M980 126 V151" stroke="#5a5a5a" stroke-width="0.8"/>
<path d="M1030 146 V116 L1035 112 H1062 V146 Z" fill="#e6e6e6" stroke="#c8c8c8" stroke-width="1"/><path d="M1050 140 H1070 M1050 147 H1070 M1055 136 V144 M1060 143 V151" stroke="#a8a8a8" stroke-width="2"/><circle cx="1060" cy="121" r="10" fill="#1d82e0"/><path d="M1060 114 L1065 120 H1062 V127 Q1058 128 1057 126 L1058 120 H1055 Z" fill="#fff"/>
<rect x="1084" y="112" width="35" height="34" fill="#e6e6e6" stroke="#a8a8a8" stroke-width="1"/><rect x="1084" y="112" width="35" height="5" fill="#bdbdbd"/><path d="M1084 124 H1115 M1084 131 H1115 M1084 138 H1115 M1092 117 V146 M1100 117 V146" stroke="#a8a8a8" stroke-width="0.8"/><path d="M1106 140 H1126 M1106 147 H1126 M1111 136 V144 M1116 143 V151" stroke="#a8a8a8" stroke-width="2"/><circle cx="1114" cy="121" r="10" fill="#1d82e0"/><path d="M1114 114 L1119 120 H1116 V127 Q1112 128 1111 126 L1112 120 H1109 Z" fill="#fff"/>
<path d="M1189 151 V120 L1196 112 V144 Z" fill="#e6e6e6" stroke="#5a5a5a" stroke-width="1"/><path d="M1189 120 V151 H1194 L1196 146 V112 Z" fill="#dcdcdc"/><path d="M1196 146 L1208 134 V112 L1196 122 Z" fill="#3fae56"/><path d="M1212 146 L1226 134 V112 L1212 124 Z" fill="#e8955a"/><path d="M1189 151 H1196 L1208 139" stroke="#5a5a5a" fill="none"/>
<path d="M1286 120 L1294 113 L1303 116 L1304 126 L1296 132 L1287 129 Z" fill="#eca678" stroke="#c07040" stroke-width="0.8"/><path d="M1311 115 L1324 137 H1298 Z" fill="#6aaee6"/><circle cx="1295" cy="140" r="10" fill="#9c66d9" stroke="#7a4ab8" stroke-width="0.8"/>
<path d="M1343 127 H1377 M1342 122 V133 M1378 122 V133" stroke="#333" stroke-width="1.4"/><path d="M1346 124 L1342 127 L1346 130 Z M1374 124 L1378 127 L1374 130 Z" fill="#333"/><rect x="1341" y="137" width="37" height="8" fill="#f2aa00"/><path d="M1345 137 V140 M1349 137 V141 M1353 137 V140 M1357 137 V141 M1361 137 V140 M1365 137 V141 M1369 137 V140 M1373 137 V141" stroke="#c07d00" stroke-width="1"/>
<rect x="1396" y="116" width="34" height="30" fill="none" stroke="#a8a8a8" stroke-width="1.2"/><rect x="1396" y="116" width="17" height="30" fill="#b8d8f2"/><path d="M1396 131 H1430" stroke="#a8a8a8"/><path d="M1413 112 V150" stroke="#6aaee6" stroke-width="1.4"/><path d="M1398 113 H1394 V149 H1398" fill="none" stroke="#6aaee6" stroke-width="1.3"/>
<path d="M1466 150 V122 H1497 V145 L1492 150 Z" fill="#d2d2d2" stroke="#5a5a5a" stroke-width="1"/><path d="M1492 122 L1497 117 V145 Z" fill="#a8a8a8"/><path d="M1461 117 H1475" stroke="#1d82e0" stroke-width="4"/><path d="M1474 111 L1482 117 L1474 123 Z" fill="#1d82e0"/><g fill="none" stroke="#333" stroke-width="2.2"><ellipse cx="1486" cy="145" rx="5" ry="3.5" transform="rotate(-40 1486 145)"/><ellipse cx="1494" cy="138" rx="5" ry="3.5" transform="rotate(-40 1494 138)"/></g>
<path d="M1521 151 V122 L1527 115 H1554 V145 L1548 151 Z" fill="#e6e6e6" stroke="#5a5a5a" stroke-width="1"/><path d="M1548 121 L1554 115 V145 L1548 151 Z" fill="#d2d2d2"/><path d="M1521 122 H1548 V151" stroke="#5a5a5a" fill="none"/><path d="M1517 141 Q1520 131 1530 131 V127 L1538 133 L1530 139 V135 Q1522 135 1517 141 Z" fill="#333"/>
<rect x="1570" y="112" width="32" height="8" rx="2" fill="#6aaee6"/><rect x="1578" y="120" width="16" height="31" fill="#6aaee6"/><path d="M1578 125 H1594 M1578 130 H1594 M1578 135 H1594 M1578 140 H1594 M1578 145 H1594" stroke="#4a90d0" stroke-width="1"/><path d="M1592 134 H1597 V141 H1604 V146 H1597 V153 H1592 V146 H1585 V141 H1592 Z" fill="#22a844"/>
<circle cx="1669" cy="128" r="13" fill="none" stroke="#3aae5a" stroke-width="1.4" stroke-dasharray="3 2.5"/><path d="M1679 131 V147 L1683 143 L1686 149 L1688 148 L1685 142 H1691 Z" fill="#fff" stroke="#333" stroke-width="1"/>
</svg>
<div class="a" style="left:5px;top:189px;width:374px;height:30px;background:#f3f3f3;border:1px solid #dedede;border-bottom:2px solid #d8d8d8"></div>
<svg class="a" style="left:12px;top:200px" width="12" height="9" viewBox="0 0 12 9"><path d="M0 4.5 L5 0.5 V8.5 Z M6 4.5 L11 0.5 V8.5 Z" fill="#777"/></svg>
<div class="t" style="left:41px;top:198px;font-size:13.4px;color:#3a3a3a;font-weight:normal;letter-spacing:0px;">BROWSER</div>
<div class="a" style="left:353px;top:203px;width:11px;height:2px;background:#777"></div>
<div class="a" style="left:5px;top:927px;width:374px;height:29px;background:#f3f3f3;border:1px solid #dedede;border-bottom:2px solid #d8d8d8"></div>
<div class="t" style="left:40px;top:935px;font-size:13.2px;color:#3a3a3a;font-weight:normal;letter-spacing:0px;">COMMENTS</div>
<svg class="a" style="left:353px;top:935px" width="11" height="11" viewBox="0 0 11 11"><path d="M5.5 0 V11 M0 5.5 H11" stroke="#666" stroke-width="2"/></svg>
<div class="a" style="left:95px;top:226px;height:25px;padding:0 16px 0 73px;background:#f2f2f2"><span style="font-size:15.5px;line-height:25px;color:#3a3a3a;white-space:nowrap">base plate (1.5cf)</span></div>
<div class="a" style="left:98px;top:230px"><svg width="22" height="14" viewBox="0 0 22 14"><path d="M1 7 Q11 -3 21 7 Q11 17 1 7 Z" fill="#777"/><circle cx="11" cy="7" r="3.6" fill="#e8e8e8"/><circle cx="11" cy="7" r="1.8" fill="#777"/></svg></div>
<div class="a" style="left:131px;top:228px"><svg width="18" height="20" viewBox="0 0 18 20"><path d="M1 4 Q1 1 9 1 Q17 1 17 4 V16 Q17 19 9 19 Q1 19 1 16 Z" fill="#dcdcdc" stroke="#888" stroke-width="1.2"/><path d="M1 4 Q9 7 17 4" fill="none" stroke="#bbb" stroke-width="1"/></svg></div>
<div class="a" style="left:95px;top:256px;height:25px;padding:0 16px 0 73px;background:#f2f2f2"><span style="font-size:15.5px;line-height:25px;color:#3a3a3a;white-space:nowrap">6mm nylon rod top</span></div>
<div class="a" style="left:98px;top:260px"><svg width="22" height="14" viewBox="0 0 22 14"><path d="M1 7 Q11 -3 21 7 Q11 17 1 7 Z" fill="#777"/><circle cx="11" cy="7" r="3.6" fill="#e8e8e8"/><circle cx="11" cy="7" r="1.8" fill="#777"/></svg></div>
<div class="a" style="left:131px;top:258px"><svg width="18" height="20" viewBox="0 0 18 20"><path d="M1 4 Q1 1 9 1 Q17 1 17 4 V16 Q17 19 9 19 Q1 19 1 16 Z" fill="#dcdcdc" stroke="#888" stroke-width="1.2"/><path d="M1 4 Q9 7 17 4" fill="none" stroke="#bbb" stroke-width="1"/></svg></div>
<div class="a" style="left:95px;top:286px;height:25px;padding:0 16px 0 73px;background:#f2f2f2"><span style="font-size:15.5px;line-height:25px;color:#3a3a3a;white-space:nowrap">6mm nylon/cf rod</span></div>
<div class="a" style="left:98px;top:290px"><svg width="22" height="16" viewBox="0 0 22 16"><path d="M2 8 Q11 -1 20 8 Q11 17 2 8 Z" fill="none" stroke="#888" stroke-width="1.4"/><circle cx="11" cy="8" r="3" fill="none" stroke="#888" stroke-width="1.3"/><path d="M4 1.5 L18 14.5" stroke="#888" stroke-width="1.5"/></svg></div>
<div class="a" style="left:131px;top:288px"><svg width="18" height="20" viewBox="0 0 18 20"><path d="M1 4 Q1 1 9 1 Q17 1 17 4 V16 Q17 19 9 19 Q1 19 1 16 Z" fill="#dcdcdc" stroke="#888" stroke-width="1.2"/><path d="M1 4 Q9 7 17 4" fill="none" stroke="#bbb" stroke-width="1"/></svg></div>
<div class="a" style="left:95px;top:316px;height:25px;padding:0 16px 0 73px;background:#f2f2f2"><span style="font-size:15.5px;line-height:25px;color:#3a3a3a;white-space:nowrap">lifter block support</span></div>
<div class="a" style="left:98px;top:320px"><svg width="22" height="14" viewBox="0 0 22 14"><path d="M1 7 Q11 -3 21 7 Q11 17 1 7 Z" fill="#777"/><circle cx="11" cy="7" r="3.6" fill="#e8e8e8"/><circle cx="11" cy="7" r="1.8" fill="#777"/></svg></div>
<div class="a" style="left:131px;top:318px"><svg width="18" height="20" viewBox="0 0 18 20"><path d="M1 4 Q1 1 9 1 Q17 1 17 4 V16 Q17 19 9 19 Q1 19 1 16 Z" fill="#dcdcdc" stroke="#888" stroke-width="1.2"/><path d="M1 4 Q9 7 17 4" fill="none" stroke="#bbb" stroke-width="1"/></svg></div>
<div class="a" style="left:95px;top:346px;height:25px;padding:0 16px 0 73px;background:#f2f2f2"><span style="font-size:15.5px;line-height:25px;color:#3a3a3a;white-space:nowrap">full wedge</span></div>
<div class="a" style="left:98px;top:350px"><svg width="22" height="16" viewBox="0 0 22 16"><path d="M2 8 Q11 -1 20 8 Q11 17 2 8 Z" fill="none" stroke="#888" stroke-width="1.4"/><circle cx="11" cy="8" r="3" fill="none" stroke="#888" stroke-width="1.3"/><path d="M4 1.5 L18 14.5" stroke="#888" stroke-width="1.5"/></svg></div>
<div class="a" style="left:131px;top:348px"><svg width="18" height="20" viewBox="0 0 18 20"><path d="M1 4 Q1 1 9 1 Q17 1 17 4 V16 Q17 19 9 19 Q1 19 1 16 Z" fill="#dcdcdc" stroke="#888" stroke-width="1.2"/><path d="M1 4 Q9 7 17 4" fill="none" stroke="#bbb" stroke-width="1"/></svg></div>
<div class="a" style="left:95px;top:376px;height:25px;padding:0 16px 0 73px;background:#f2f2f2"><span style="font-size:15.5px;line-height:25px;color:#3a3a3a;white-space:nowrap">1.5mm cf servo mount</span></div>
<div class="a" style="left:98px;top:380px"><svg width="22" height="14" viewBox="0 0 22 14"><path d="M1 7 Q11 -3 21 7 Q11 17 1 7 Z" fill="#777"/><circle cx="11" cy="7" r="3.6" fill="#e8e8e8"/><circle cx="11" cy="7" r="1.8" fill="#777"/></svg></div>
<div class="a" style="left:131px;top:378px"><svg width="18" height="20" viewBox="0 0 18 20"><path d="M1 4 Q1 1 9 1 Q17 1 17 4 V16 Q17 19 9 19 Q1 19 1 16 Z" fill="#dcdcdc" stroke="#888" stroke-width="1.2"/><path d="M1 4 Q9 7 17 4" fill="none" stroke="#bbb" stroke-width="1"/></svg></div>
<div class="a" style="left:95px;top:406px;height:25px;padding:0 16px 0 73px;background:#f2f2f2"><span style="font-size:15.5px;line-height:25px;color:#3a3a3a;white-space:nowrap">servo bushing</span></div>
<div class="a" style="left:98px;top:410px"><svg width="22" height="14" viewBox="0 0 22 14"><path d="M1 7 Q11 -3 21 7 Q11 17 1 7 Z" fill="#777"/><circle cx="11" cy="7" r="3.6" fill="#e8e8e8"/><circle cx="11" cy="7" r="1.8" fill="#777"/></svg></div>
<div class="a" style="left:131px;top:408px"><svg width="18" height="20" viewBox="0 0 18 20"><path d="M1 4 Q1 1 9 1 Q17 1 17 4 V16 Q17 19 9 19 Q1 19 1 16 Z" fill="#dcdcdc" stroke="#888" stroke-width="1.2"/><path d="M1 4 Q9 7 17 4" fill="none" stroke="#bbb" stroke-width="1"/></svg></div>
<div class="a" style="left:95px;top:436px;height:25px;padding:0 16px 0 73px;background:#f2f2f2"><span style="font-size:15.5px;line-height:25px;color:#3a3a3a;white-space:nowrap">split wedge</span></div>
<div class="a" style="left:98px;top:440px"><svg width="22" height="16" viewBox="0 0 22 16"><path d="M2 8 Q11 -1 20 8 Q11 17 2 8 Z" fill="none" stroke="#888" stroke-width="1.4"/><circle cx="11" cy="8" r="3" fill="none" stroke="#888" stroke-width="1.3"/><path d="M4 1.5 L18 14.5" stroke="#888" stroke-width="1.5"/></svg></div>
<div class="a" style="left:131px;top:438px"><svg width="18" height="20" viewBox="0 0 18 20"><path d="M1 4 Q1 1 9 1 Q17 1 17 4 V16 Q17 19 9 19 Q1 19 1 16 Z" fill="#dcdcdc" stroke="#888" stroke-width="1.2"/><path d="M1 4 Q9 7 17 4" fill="none" stroke="#bbb" stroke-width="1"/></svg></div>
<div class="a" style="left:95px;top:466px;height:25px;padding:0 16px 0 73px;background:#f2f2f2"><span style="font-size:15.5px;line-height:25px;color:#3a3a3a;white-space:nowrap">main body</span></div>
<div class="a" style="left:98px;top:470px"><svg width="22" height="14" viewBox="0 0 22 14"><path d="M1 7 Q11 -3 21 7 Q11 17 1 7 Z" fill="#777"/><circle cx="11" cy="7" r="3.6" fill="#e8e8e8"/><circle cx="11" cy="7" r="1.8" fill="#777"/></svg></div>
<div class="a" style="left:131px;top:468px"><svg width="18" height="20" viewBox="0 0 18 20"><path d="M1 4 Q1 1 9 1 Q17 1 17 4 V16 Q17 19 9 19 Q1 19 1 16 Z" fill="#dcdcdc" stroke="#888" stroke-width="1.2"/><path d="M1 4 Q9 7 17 4" fill="none" stroke="#bbb" stroke-width="1"/></svg></div>
<div class="a" style="left:95px;top:496px;height:25px;padding:0 16px 0 73px;background:#f2f2f2"><span style="font-size:15.5px;line-height:25px;color:#3a3a3a;white-space:nowrap">motor guard (1) (2)</span></div>
<div class="a" style="left:98px;top:500px"><svg width="22" height="14" viewBox="0 0 22 14"><path d="M1 7 Q11 -3 21 7 Q11 17 1 7 Z" fill="#777"/><circle cx="11" cy="7" r="3.6" fill="#e8e8e8"/><circle cx="11" cy="7" r="1.8" fill="#777"/></svg></div>
<div class="a" style="left:131px;top:498px"><svg width="18" height="20" viewBox="0 0 18 20"><path d="M1 4 Q1 1 9 1 Q17 1 17 4 V16 Q17 19 9 19 Q1 19 1 16 Z" fill="#dcdcdc" stroke="#888" stroke-width="1.2"/><path d="M1 4 Q9 7 17 4" fill="none" stroke="#bbb" stroke-width="1"/></svg></div>
<div class="a" style="left:95px;top:526px;height:25px;padding:0 16px 0 73px;background:#f2f2f2"><span style="font-size:15.5px;line-height:25px;color:#3a3a3a;white-space:nowrap">motor guard (1) (2) (1)</span></div>
<div class="a" style="left:98px;top:530px"><svg width="22" height="14" viewBox="0 0 22 14"><path d="M1 7 Q11 -3 21 7 Q11 17 1 7 Z" fill="#777"/><circle cx="11" cy="7" r="3.6" fill="#e8e8e8"/><circle cx="11" cy="7" r="1.8" fill="#777"/></svg></div>
<div class="a" style="left:131px;top:528px"><svg width="18" height="20" viewBox="0 0 18 20"><path d="M1 4 Q1 1 9 1 Q17 1 17 4 V16 Q17 19 9 19 Q1 19 1 16 Z" fill="#dcdcdc" stroke="#888" stroke-width="1.2"/><path d="M1 4 Q9 7 17 4" fill="none" stroke="#bbb" stroke-width="1"/></svg></div>
<div class="a" style="left:95px;top:556px;height:25px;padding:0 16px 0 73px;background:#f2f2f2"><span style="font-size:15.5px;line-height:25px;color:#3a3a3a;white-space:nowrap">side fork (1) (1)</span></div>
<div class="a" style="left:98px;top:560px"><svg width="22" height="16" viewBox="0 0 22 16"><path d="M2 8 Q11 -1 20 8 Q11 17 2 8 Z" fill="none" stroke="#888" stroke-width="1.4"/><circle cx="11" cy="8" r="3" fill="none" stroke="#888" stroke-width="1.3"/><path d="M4 1.5 L18 14.5" stroke="#888" stroke-width="1.5"/></svg></div>
<div class="a" style="left:131px;top:558px"><svg width="18" height="20" viewBox="0 0 18 20"><path d="M1 4 Q1 1 9 1 Q17 1 17 4 V16 Q17 19 9 19 Q1 19 1 16 Z" fill="#dcdcdc" stroke="#888" stroke-width="1.2"/><path d="M1 4 Q9 7 17 4" fill="none" stroke="#bbb" stroke-width="1"/></svg></div>
<div class="a" style="left:95px;top:586px;height:25px;padding:0 16px 0 73px;background:#f2f2f2"><span style="font-size:15.5px;line-height:25px;color:#3a3a3a;white-space:nowrap">side fork (1) (1) (1)</span></div>
<div class="a" style="left:98px;top:590px"><svg width="22" height="14" viewBox="0 0 22 14"><path d="M1 7 Q11 -3 21 7 Q11 17 1 7 Z" fill="#777"/><circle cx="11" cy="7" r="3.6" fill="#e8e8e8"/><circle cx="11" cy="7" r="1.8" fill="#777"/></svg></div>
<div class="a" style="left:131px;top:588px"><svg width="18" height="20" viewBox="0 0 18 20"><path d="M1 4 Q1 1 9 1 Q17 1 17 4 V16 Q17 19 9 19 Q1 19 1 16 Z" fill="#dcdcdc" stroke="#888" stroke-width="1.2"/><path d="M1 4 Q9 7 17 4" fill="none" stroke="#bbb" stroke-width="1"/></svg></div>
<div class="a" style="left:95px;top:616px;height:25px;padding:0 16px 0 73px;background:#f2f2f2"><span style="font-size:15.5px;line-height:25px;color:#3a3a3a;white-space:nowrap">long forks</span></div>
<div class="a" style="left:98px;top:620px"><svg width="22" height="14" viewBox="0 0 22 14"><path d="M1 7 Q11 -3 21 7 Q11 17 1 7 Z" fill="#777"/><circle cx="11" cy="7" r="3.6" fill="#e8e8e8"/><circle cx="11" cy="7" r="1.8" fill="#777"/></svg></div>
<div class="a" style="left:131px;top:618px"><svg width="18" height="20" viewBox="0 0 18 20"><path d="M1 4 Q1 1 9 1 Q17 1 17 4 V16 Q17 19 9 19 Q1 19 1 16 Z" fill="#dcdcdc" stroke="#888" stroke-width="1.2"/><path d="M1 4 Q9 7 17 4" fill="none" stroke="#bbb" stroke-width="1"/></svg></div>
<div class="a" style="left:95px;top:646px;height:25px;padding:0 16px 0 73px;background:#f2f2f2"><span style="font-size:15.5px;line-height:25px;color:#3a3a3a;white-space:nowrap">Body224</span></div>
<div class="a" style="left:98px;top:650px"><svg width="22" height="14" viewBox="0 0 22 14"><path d="M1 7 Q11 -3 21 7 Q11 17 1 7 Z" fill="#777"/><circle cx="11" cy="7" r="3.6" fill="#e8e8e8"/><circle cx="11" cy="7" r="1.8" fill="#777"/></svg></div>
<div class="a" style="left:131px;top:648px"><svg width="18" height="20" viewBox="0 0 18 20"><path d="M1 4 Q1 1 9 1 Q17 1 17 4 V16 Q17 19 9 19 Q1 19 1 16 Z" fill="#dcdcdc" stroke="#888" stroke-width="1.2"/><path d="M1 4 Q9 7 17 4" fill="none" stroke="#bbb" stroke-width="1"/></svg></div>
<div class="a" style="left:73px;top:676px;height:25px;padding:0 16px 0 72px;background:#f2f2f2"><span style="font-size:15.5px;line-height:25px;color:#3a3a3a;white-space:nowrap">Fasteners</span></div>
<div class="a" style="left:50px;top:682px"><svg width="10" height="12" viewBox="0 0 10 12"><path d="M2 1 L7 6 L2 11" fill="none" stroke="#555" stroke-width="1.5"/></svg></div>
<div class="a" style="left:75px;top:681px"><svg width="22" height="14" viewBox="0 0 22 14"><path d="M1 7 Q11 -3 21 7 Q11 17 1 7 Z" fill="#777"/><circle cx="11" cy="7" r="3.6" fill="#e8e8e8"/><circle cx="11" cy="7" r="1.8" fill="#777"/></svg></div>
<div class="a" style="left:107px;top:679px"><svg width="22" height="18" viewBox="0 0 22 18"><path d="M1 2 H8 L10 4.5 H21 V17 H1 Z" fill="#f6f6f6" stroke="#888" stroke-width="1.2"/><path d="M1 6 H21" stroke="#888" stroke-width="1"/></svg></div>
<div class="a" style="left:73px;top:706px;height:25px;padding:0 16px 0 72px;background:#f2f2f2"><span style="font-size:15.5px;line-height:25px;color:#3a3a3a;white-space:nowrap">Sketches</span></div>
<div class="a" style="left:50px;top:712px"><svg width="10" height="12" viewBox="0 0 10 12"><path d="M2 1 L7 6 L2 11" fill="none" stroke="#555" stroke-width="1.5"/></svg></div>
<div class="a" style="left:75px;top:711px"><svg width="22" height="14" viewBox="0 0 22 14"><path d="M1 7 Q11 -3 21 7 Q11 17 1 7 Z" fill="#777"/><circle cx="11" cy="7" r="3.6" fill="#e8e8e8"/><circle cx="11" cy="7" r="1.8" fill="#777"/></svg></div>
<div class="a" style="left:107px;top:709px"><svg width="22" height="18" viewBox="0 0 22 18"><path d="M1 2 H8 L10 4.5 H21 V17 H1 Z" fill="#f6f6f6" stroke="#888" stroke-width="1.2"/><path d="M1 6 H21" stroke="#888" stroke-width="1"/></svg></div>
<div class="a" style="left:73px;top:736px;height:25px;padding:0 16px 0 72px;background:#f2f2f2"><span style="font-size:15.5px;line-height:25px;color:#3a3a3a;white-space:nowrap">Construction</span></div>
<div class="a" style="left:49px;top:742px"><svg width="12" height="10" viewBox="0 0 12 10"><path d="M1 2 L6 7 L11 2" fill="none" stroke="#555" stroke-width="1.5"/></svg></div>
<div class="a" style="left:75px;top:741px"><svg width="22" height="14" viewBox="0 0 22 14"><path d="M1 7 Q11 -3 21 7 Q11 17 1 7 Z" fill="#777"/><circle cx="11" cy="7" r="3.6" fill="#e8e8e8"/><circle cx="11" cy="7" r="1.8" fill="#777"/></svg></div>
<div class="a" style="left:107px;top:739px"><svg width="22" height="18" viewBox="0 0 22 18"><path d="M1 2 H8 L10 4.5 H21 V17 H1 Z" fill="#f6f6f6" stroke="#888" stroke-width="1.2"/><path d="M1 6 H21" stroke="#888" stroke-width="1"/></svg></div>
<div class="a" style="left:95px;top:766px;height:25px;padding:0 16px 0 73px;background:#f2f2f2"><span style="font-size:15.5px;line-height:25px;color:#3a3a3a;white-space:nowrap">Plane1</span></div>
<div class="a" style="left:98px;top:770px"><svg width="22" height="16" viewBox="0 0 22 16"><path d="M2 8 Q11 -1 20 8 Q11 17 2 8 Z" fill="none" stroke="#888" stroke-width="1.4"/><circle cx="11" cy="8" r="3" fill="none" stroke="#888" stroke-width="1.3"/><path d="M4 1.5 L18 14.5" stroke="#888" stroke-width="1.5"/></svg></div>
<div class="a" style="left:129px;top:768px"><svg width="22" height="20" viewBox="0 0 22 20"><rect x="1" y="6" width="12" height="13" fill="#e58a4e"/><rect x="6" y="1" width="13" height="13" fill="none" stroke="#666" stroke-width="1.2"/><rect x="6" y="6" width="7" height="8" fill="#f0b58c"/></svg></div>
<div class="a" style="left:95px;top:796px;height:25px;padding:0 16px 0 73px;background:#f2f2f2"><span style="font-size:15.5px;line-height:25px;color:#3a3a3a;white-space:nowrap">middle</span></div>
<div class="a" style="left:98px;top:800px"><svg width="22" height="16" viewBox="0 0 22 16"><path d="M2 8 Q11 -1 20 8 Q11 17 2 8 Z" fill="none" stroke="#888" stroke-width="1.4"/><circle cx="11" cy="8" r="3" fill="none" stroke="#888" stroke-width="1.3"/><path d="M4 1.5 L18 14.5" stroke="#888" stroke-width="1.5"/></svg></div>
<div class="a" style="left:129px;top:798px"><svg width="22" height="20" viewBox="0 0 22 20"><rect x="1" y="6" width="12" height="13" fill="#e58a4e"/><rect x="6" y="1" width="13" height="13" fill="none" stroke="#666" stroke-width="1.2"/><rect x="6" y="6" width="7" height="8" fill="#f0b58c"/></svg></div>
<div class="a" style="left:95px;top:826px;height:25px;padding:0 16px 0 73px;background:#f2f2f2"><span style="font-size:15.5px;line-height:25px;color:#3a3a3a;white-space:nowrap">Plane3</span></div>
<div class="a" style="left:98px;top:830px"><svg width="22" height="16" viewBox="0 0 22 16"><path d="M2 8 Q11 -1 20 8 Q11 17 2 8 Z" fill="none" stroke="#888" stroke-width="1.4"/><circle cx="11" cy="8" r="3" fill="none" stroke="#888" stroke-width="1.3"/><path d="M4 1.5 L18 14.5" stroke="#888" stroke-width="1.5"/></svg></div>
<div class="a" style="left:129px;top:828px"><svg width="22" height="20" viewBox="0 0 22 20"><rect x="1" y="6" width="12" height="13" fill="#e58a4e"/><rect x="6" y="1" width="13" height="13" fill="none" stroke="#666" stroke-width="1.2"/><rect x="6" y="6" width="7" height="8" fill="#f0b58c"/></svg></div>
<div class="a" style="left:95px;top:856px;height:25px;padding:0 16px 0 73px;background:#f2f2f2"><span style="font-size:15.5px;line-height:25px;color:#3a3a3a;white-space:nowrap">Plane4</span></div>
<div class="a" style="left:98px;top:860px"><svg width="22" height="16" viewBox="0 0 22 16"><path d="M2 8 Q11 -1 20 8 Q11 17 2 8 Z" fill="none" stroke="#888" stroke-width="1.4"/><circle cx="11" cy="8" r="3" fill="none" stroke="#888" stroke-width="1.3"/><path d="M4 1.5 L18 14.5" stroke="#888" stroke-width="1.5"/></svg></div>
<div class="a" style="left:129px;top:858px"><svg width="22" height="20" viewBox="0 0 22 20"><rect x="1" y="6" width="12" height="13" fill="#e58a4e"/><rect x="6" y="1" width="13" height="13" fill="none" stroke="#666" stroke-width="1.2"/><rect x="6" y="6" width="7" height="8" fill="#f0b58c"/></svg></div>
<div class="a" style="left:73px;top:886px;width:305px;height:25px;padding:0 0 0 103px;background:#f2f2f2"><span style="font-size:15.5px;line-height:25px;color:#3a3a3a;white-space:nowrap">Blitz Lite 20mm - Just Cu...</span></div>
<div class="a" style="left:50px;top:892px"><svg width="10" height="12" viewBox="0 0 10 12"><path d="M2 1 L7 6 L2 11" fill="none" stroke="#555" stroke-width="1.5"/></svg></div>
<div class="a" style="left:75px;top:891px"><svg width="22" height="14" viewBox="0 0 22 14"><path d="M1 7 Q11 -3 21 7 Q11 17 1 7 Z" fill="#777"/><circle cx="11" cy="7" r="3.6" fill="#e8e8e8"/><circle cx="11" cy="7" r="1.8" fill="#777"/></svg></div>
<div class="a" style="left:106px;top:887px"><svg width="22" height="22" viewBox="0 0 22 22"><rect x="1" y="6" width="15" height="15" fill="#e6e6e6" stroke="#777" stroke-width="1.2"/><path d="M1 13 H16 M8 6 V21" stroke="#777" stroke-width="1"/><path d="M17 1 V9 M14 4 H20 M14 8 Q17 11 20 8" fill="none" stroke="#555" stroke-width="1.3"/></svg></div>
<div class="a" style="left:138px;top:889px"><svg width="22" height="18" viewBox="0 0 22 18"><g fill="none" stroke="#777" stroke-width="1.8"><path d="M9 11 L13 7"/><rect x="1.5" y="8" width="9" height="6" rx="3" transform="rotate(-40 6 11)"/><rect x="11.5" y="4" width="9" height="6" rx="3" transform="rotate(-40 16 7)"/></g></svg></div>
<div class="a" style="left:11px;top:565px;width:4px;height:125px;background:#e2e2e2;border-radius:2px"></div>
<svg class="a" style="left:1810px;top:200px" width="90" height="90" viewBox="0 0 90 90">
<rect x="20.5" y="21.5" width="52" height="52" fill="#efeff0" stroke="#7a7a7a" stroke-width="1"/>
<rect x="30" y="31" width="33" height="33" fill="#e4e5e8"/>
<text x="46.5" y="53" font-family="Liberation Sans" font-size="15" font-weight="bold" fill="#8e8e8e" textLength="22" lengthAdjust="spacingAndGlyphs" text-anchor="middle" transform="rotate(180 46.5 47.5)">TOP</text>
<text x="64" y="19" font-family="Liberation Sans" font-size="13" fill="#6a6ae0">Z</text>
<text x="8" y="74" font-family="Liberation Sans" font-size="13" fill="#ef6a6a">X</text>
<text x="72" y="81" font-family="Liberation Sans" font-size="12" fill="#7ad87a">Y</text>
</svg>
<div class="a" style="left:811px;top:924px;width:300px;height:32px;background:rgba(240,240,240,0.9)"></div>
<div class="a" style="left:0;top:963px;width:1920px;height:57px;background:#f3f3f3"></div>
<svg class="a" style="left:0;top:980px" width="170" height="36" viewBox="0 0 170 36">
<g fill="#7a7a7a">
<rect x="13" y="11" width="2.4" height="15"/><path d="M27 11 V26 L16.5 18.5 Z"/>
<path d="M55 11 V26 L44.5 18.5 Z"/><rect x="57" y="15" width="2.4" height="7"/>
<path d="M76 10 L91 18.5 L76 27 Z"/>
<rect x="105" y="15" width="2.4" height="7"/><path d="M108.5 11 L119 18.5 L108.5 26 Z"/>
<path d="M138 11 L148.5 18.5 L138 26 Z"/><rect x="150" y="11" width="2.4" height="15"/>
</g></svg>
<div class="a" style="left:170px;top:1012px;width:1715px;height:2px;background:#c6c6c6"></div>
<div class="a" style="left:0;top:1020px;width:1920px;height:60px;background:#eeeeee;border-top:1px solid #cfcfcf"></div>
<svg class="a" style="left:0;top:963px" width="1920" height="57" viewBox="0 963 1920 57"><defs>
<symbol id="tFlag" viewBox="0 0 22 22"><rect x="0.7" y="1" width="7" height="20" fill="#f4f4f4" stroke="#555" stroke-width="1.2"/><rect x="7.7" y="1" width="13" height="8" fill="#6aaee6"/></symbol>
<symbol id="tSk" viewBox="0 0 22 22"><path d="M3 2.5 H17 M2.5 3 V17 M3 17.5 H10 M17.5 3 V12" stroke="#666" stroke-width="1" fill="none" stroke-dasharray="2.5 1"/><g fill="#3a88d8"><rect x="1" y="1" width="3" height="3"/><rect x="16" y="1" width="3" height="3"/><rect x="1" y="16" width="3" height="3"/></g><path d="M10 21 L11 17 L18 10 L21 13 L14 20 Z" fill="#f0a020"/><path d="M18 10 L20 8 L23 11 L21 13 Z" fill="#e04040"/></symbol>
<symbol id="tEx" viewBox="0 0 22 22"><path d="M1 18 H14 L18 14 V17 L14 21 H1 Z" fill="#c9c9c9"/><path d="M1 5 L5 1 H18 L14 5 Z" fill="#8cc4f0"/><rect x="1" y="5" width="13" height="13" fill="#6aaee6"/><path d="M14 5 L18 1 V14 L14 18 Z" fill="#4a90d0"/><path d="M21 17 V4" stroke="#333" stroke-width="1.3"/><path d="M19 5 L21 1 L23 5 Z" fill="#333"/></symbol>
<symbol id="tTri" viewBox="0 0 22 22"><path d="M11 1 L21 20 H11 Z" fill="#6aaee6"/><path d="M11 1 L1 20 H11 Z" fill="#f2f2f2" stroke="#999" stroke-width="1"/></symbol>
<symbol id="tJo" viewBox="0 0 22 22"><rect x="2" y="1" width="8" height="10" rx="2" fill="#eee" stroke="#777" stroke-width="1.2"/><rect x="12" y="11" width="8" height="10" rx="2" fill="#eee" stroke="#777" stroke-width="1.2"/><path d="M5 14 H10" stroke="#6aaee6" stroke-width="1.5"/></symbol>
<symbol id="tMv" viewBox="0 0 22 22"><path d="M11 2 V20 M2 11 H20" stroke="#666" stroke-width="1.6"/><path d="M8 5 L11 1 L14 5 Z M8 17 L11 21 L14 17 Z M5 8 L1 11 L5 14 Z M17 8 L21 11 L17 14 Z" fill="#666"/></symbol>
<symbol id="tCo" viewBox="0 0 22 22"><path d="M1 21 V11 L4 8 H9 V4 L12 1 H21 V15 L18 18 H12 V21 Z" fill="#6aaee6"/></symbol>
<symbol id="tFi" viewBox="0 0 22 22"><path d="M1 21 V7 Q1 1 8 1 H12 Q21 2 21 12 V16 L17 21 Z" fill="#dcdcdc" stroke="#888" stroke-width="1"/><path d="M12 1 Q21 2 21 12 L17 14 Q16 6 10 5 Z" fill="#8cc4f0"/></symbol>
<symbol id="tSh" viewBox="0 0 22 22"><path d="M1 21 V5 L5 1 H21 V17 L17 21 Z" fill="#eee" stroke="#888" stroke-width="1"/><rect x="5" y="7" width="10" height="10" fill="#6aaee6"/></symbol>
<symbol id="tWe" viewBox="0 0 22 22"><path d="M1 16 L14 3 L21 10 L8 21 Z" fill="#dcdcdc" stroke="#888" stroke-width="1"/></symbol>
</defs>
<use href="#tFlag" x="183" y="982" width="22" height="22"/>
<use href="#tSk" x="213" y="982" width="22" height="22"/>
<use href="#tEx" x="243" y="982" width="22" height="22"/>
<use href="#tEx" x="273" y="982" width="22" height="22"/>
<use href="#tEx" x="303" y="982" width="22" height="22"/>
<use href="#tSk" x="333" y="982" width="22" height="22"/>
<use href="#tEx" x="363" y="982" width="22" height="22"/>
<use href="#tTri" x="393" y="982" width="22" height="22"/>
<use href="#tSk" x="423" y="982" width="22" height="22"/>
<use href="#tEx" x="453" y="982" width="22" height="22"/>
<use href="#tSk" x="483" y="982" width="22" height="22"/>
<use href="#tEx" x="513" y="982" width="22" height="22"/>
<use href="#tTri" x="543" y="982" width="22" height="22"/>
<use href="#tJo" x="573" y="982" width="22" height="22"/>
<use href="#tEx" x="603" y="982" width="22" height="22"/>
<use href="#tEx" x="633" y="982" width="22" height="22"/>
<use href="#tEx" x="663" y="982" width="22" height="22"/>
<use href="#tEx" x="693" y="982" width="22" height="22"/>
<use href="#tEx" x="723" y="982" width="22" height="22"/>
<use href="#tEx" x="753" y="982" width="22" height="22"/>
<use href="#tSk" x="783" y="982" width="22" height="22"/>
<use href="#tEx" x="813" y="982" width="22" height="22"/>
<use href="#tSk" x="843" y="982" width="22" height="22"/>
<use href="#tEx" x="873" y="982" width="22" height="22"/>
<use href="#tEx" x="903" y="982" width="22" height="22"/>
<g opacity="0.35">
<use href="#tJo" x="933" y="982" width="22" height="22"/>
<use href="#tMv" x="963" y="982" width="22" height="22"/>
<use href="#tJo" x="993" y="982" width="22" height="22"/>
<use href="#tMv" x="1023" y="982" width="22" height="22"/>
<use href="#tCo" x="1053" y="982" width="22" height="22"/>
<use href="#tFi" x="1083" y="982" width="22" height="22"/>
<use href="#tSk" x="1113" y="982" width="22" height="22"/>
<use href="#tEx" x="1143" y="982" width="22" height="22"/>
<use href="#tFi" x="1173" y="982" width="22" height="22"/>
<use href="#tFlag" x="1203" y="982" width="22" height="22"/>
<use href="#tSk" x="1233" y="982" width="22" height="22"/>
<use href="#tSh" x="1263" y="982" width="22" height="22"/>
<use href="#tSh" x="1293" y="982" width="22" height="22"/>
<use href="#tSk" x="1323" y="982" width="22" height="22"/>
<use href="#tEx" x="1353" y="982" width="22" height="22"/>
<use href="#tSk" x="1383" y="982" width="22" height="22"/>
<use href="#tEx" x="1413" y="982" width="22" height="22"/>
<use href="#tJo" x="1443" y="982" width="22" height="22"/>
<use href="#tMv" x="1473" y="982" width="22" height="22"/>
<use href="#tCo" x="1503" y="982" width="22" height="22"/>
<use href="#tSk" x="1533" y="982" width="22" height="22"/>
<use href="#tEx" x="1563" y="982" width="22" height="22"/>
<use href="#tEx" x="1593" y="982" width="22" height="22"/>
<use href="#tWe" x="1623" y="982" width="22" height="22"/>
<use href="#tTri" x="1653" y="982" width="22" height="22"/>
<use href="#tCo" x="1683" y="982" width="22" height="22"/>
<use href="#tSk" x="1713" y="982" width="22" height="22"/>
<use href="#tEx" x="1743" y="982" width="22" height="22"/>
<use href="#tFi" x="1773" y="982" width="22" height="22"/>
<use href="#tSk" x="1803" y="982" width="22" height="22"/>
<use href="#tEx" x="1833" y="982" width="22" height="22"/>
</g>
<rect x="186" y="1012" width="1699" height="3.5" fill="#cacaca"/><rect x="172" y="1012" width="5" height="3.5" fill="#cacaca"/><rect x="179" y="1012" width="5" height="3.5" fill="#cacaca"/>
<rect x="192" y="1007" width="1.6" height="6" fill="#c6c6c6"/>
<rect x="222" y="1007" width="1.6" height="6" fill="#c6c6c6"/>
<rect x="252" y="1007" width="1.6" height="6" fill="#c6c6c6"/>
<rect x="282" y="1007" width="1.6" height="6" fill="#c6c6c6"/>
<rect x="312" y="1007" width="1.6" height="6" fill="#c6c6c6"/>
<rect x="342" y="1007" width="1.6" height="6" fill="#c6c6c6"/>
<rect x="372" y="1007" width="1.6" height="6" fill="#c6c6c6"/>
<rect x="402" y="1007" width="1.6" height="6" fill="#c6c6c6"/>
<rect x="432" y="1007" width="1.6" height="6" fill="#c6c6c6"/>
<rect x="462" y="1007" width="1.6" height="6" fill="#c6c6c6"/>
<rect x="492" y="1007" width="1.6" height="6" fill="#c6c6c6"/>
<rect x="522" y="1007" width="1.6" height="6" fill="#c6c6c6"/>
<rect x="552" y="1007" width="1.6" height="6" fill="#c6c6c6"/>
<rect x="582" y="1007" width="1.6" height="6" fill="#c6c6c6"/>
<rect x="612" y="1007" width="1.6" height="6" fill="#c6c6c6"/>
<rect x="642" y="1007" width="1.6" height="6" fill="#c6c6c6"/>
<rect x="672" y="1007" width="1.6" height="6" fill="#c6c6c6"/>
<rect x="702" y="1007" width="1.6" height="6" fill="#c6c6c6"/>
<rect x="732" y="1007" width="1.6" height="6" fill="#c6c6c6"/>
<rect x="762" y="1007" width="1.6" height="6" fill="#c6c6c6"/>
<rect x="792" y="1007" width="1.6" height="6" fill="#c6c6c6"/>
<rect x="822" y="1007" width="1.6" height="6" fill="#c6c6c6"/>
<rect x="852" y="1007" width="1.6" height="6" fill="#c6c6c6"/>
<rect x="882" y="1007" width="1.6" height="6" fill="#c6c6c6"/>
<rect x="912" y="1007" width="1.6" height="6" fill="#c6c6c6"/>
<rect x="942" y="1007" width="1.6" height="6" fill="#c6c6c6"/>
<rect x="972" y="1007" width="1.6" height="6" fill="#c6c6c6"/>
<rect x="1002" y="1007" width="1.6" height="6" fill="#c6c6c6"/>
<rect x="1032" y="1007" width="1.6" height="6" fill="#c6c6c6"/>
<rect x="1062" y="1007" width="1.6" height="6" fill="#c6c6c6"/>
<rect x="1092" y="1007" width="1.6" height="6" fill="#c6c6c6"/>
<rect x="1122" y="1007" width="1.6" height="6" fill="#c6c6c6"/>
<rect x="1152" y="1007" width="1.6" height="6" fill="#c6c6c6"/>
<rect x="1182" y="1007" width="1.6" height="6" fill="#c6c6c6"/>
<rect x="1212" y="1007" width="1.6" height="6" fill="#c6c6c6"/>
<rect x="1242" y="1007" width="1.6" height="6" fill="#c6c6c6"/>
<rect x="1272" y="1007" width="1.6" height="6" fill="#c6c6c6"/>
<rect x="1302" y="1007" width="1.6" height="6" fill="#c6c6c6"/>
<rect x="1332" y="1007" width="1.6" height="6" fill="#c6c6c6"/>
<rect x="1362" y="1007" width="1.6" height="6" fill="#c6c6c6"/>
<rect x="1392" y="1007" width="1.6" height="6" fill="#c6c6c6"/>
<rect x="1422" y="1007" width="1.6" height="6" fill="#c6c6c6"/>
<rect x="1452" y="1007" width="1.6" height="6" fill="#c6c6c6"/>
<rect x="1482" y="1007" width="1.6" height="6" fill="#c6c6c6"/>
<rect x="1512" y="1007" width="1.6" height="6" fill="#c6c6c6"/>
<rect x="1542" y="1007" width="1.6" height="6" fill="#c6c6c6"/>
<rect x="1572" y="1007" width="1.6" height="6" fill="#c6c6c6"/>
<rect x="1602" y="1007" width="1.6" height="6" fill="#c6c6c6"/>
<rect x="1632" y="1007" width="1.6" height="6" fill="#c6c6c6"/>
<rect x="1662" y="1007" width="1.6" height="6" fill="#c6c6c6"/>
<rect x="1692" y="1007" width="1.6" height="6" fill="#c6c6c6"/>
<rect x="1722" y="1007" width="1.6" height="6" fill="#c6c6c6"/>
<rect x="1752" y="1007" width="1.6" height="6" fill="#c6c6c6"/>
<rect x="1782" y="1007" width="1.6" height="6" fill="#c6c6c6"/>
<rect x="1812" y="1007" width="1.6" height="6" fill="#c6c6c6"/>
<rect x="1842" y="1007" width="1.6" height="6" fill="#c6c6c6"/>
<rect x="1872" y="1007" width="1.6" height="6" fill="#c6c6c6"/>
<path d="M920 976 H935 V980 L930 985 V1016 H926 V985 L920 980 Z" fill="#333"/>
<g transform="translate(1893 998)"><circle r="8" fill="#6e6e6e"/><g fill="#6e6e6e"><rect x="-2.5" y="-11" width="5" height="6" transform="rotate(0)"/><rect x="-2.5" y="-11" width="5" height="6" transform="rotate(45)"/><rect x="-2.5" y="-11" width="5" height="6" transform="rotate(90)"/><rect x="-2.5" y="-11" width="5" height="6" transform="rotate(135)"/><rect x="-2.5" y="-11" width="5" height="6" transform="rotate(180)"/><rect x="-2.5" y="-11" width="5" height="6" transform="rotate(225)"/><rect x="-2.5" y="-11" width="5" height="6" transform="rotate(270)"/><rect x="-2.5" y="-11" width="5" height="6" transform="rotate(315)"/></g><circle r="3.5" fill="#f3f3f3"/></g>
<rect x="1885" y="965" width="26" height="5" rx="2.5" fill="#dcdcdc"/>
</svg>
<svg class="a" style="left:810px;top:925px" width="300" height="30" viewBox="810 925 300 30">
<ellipse cx="825" cy="940" rx="9.5" ry="5" fill="none" stroke="#333" stroke-width="1.4"/><path d="M825 929 V951" stroke="#3a8ee0" stroke-width="1.6" stroke-dasharray="3 2"/><path d="M843 937 H849 L846 941 Z" fill="#555"/>
<path d="M860 934 L866 929 V934" fill="none" stroke="#555" stroke-width="1.2"/><rect x="860" y="934" width="18" height="14" fill="#fff" stroke="#555" stroke-width="1.3"/><rect x="862.5" y="937" width="13" height="8" fill="#6aaee6"/>
<path d="M894 950 Q889 944 890 938 L892 932 Q894 931 895 933 L896 938 V929 Q898 927 899 929 V937 V927 Q901 925 902 927 V937 V929 Q904 927 905 929 V939 L907 935 Q909 934 910 936 L906 946 Q903 951 900 951 Z" fill="none" stroke="#777" stroke-width="1.1"/>
<circle cx="929" cy="941" r="6" fill="#ddd" stroke="#555" stroke-width="1.3"/><path d="M933 945 L938 950" stroke="#8a6a20" stroke-width="2"/><path d="M939 928 V934 M936 931 H942 M936 936 H942" stroke="#333" stroke-width="1.2"/>
<rect x="955" y="930" width="20" height="20" fill="none" stroke="#444" stroke-width="1.1" stroke-dasharray="2 1.5"/><circle cx="964" cy="939" r="8" fill="#ddd" stroke="#555" stroke-width="1.3"/><path d="M970 945 L975 950" stroke="#8a6a20" stroke-width="2"/><path d="M983 937 H989 L986 941 Z" fill="#555"/>
<rect x="998" y="933" width="19" height="13" fill="#c8c8c8" stroke="#555" stroke-width="1.3"/><path d="M1004 949 H1011 M1007.5 946 V949" stroke="#555" stroke-width="1.3"/><path d="M1021 937 H1027 L1024 941 Z" fill="#555"/>
<g fill="none" stroke="#555" stroke-width="1.3"><rect x="1037" y="931" width="16" height="16"/><path d="M1042.3 931 V947 M1047.6 931 V947 M1037 936.3 H1053 M1037 941.6 H1053"/></g><path d="M1060 937 H1066 L1063 941 Z" fill="#555"/>
<g fill="none" stroke="#555" stroke-width="1.3"><rect x="1075" y="932" width="19" height="16"/><path d="M1084.5 932 V948 M1075 940 H1094"/><rect x="1078" y="935" width="4" height="3"/><rect x="1087" y="935" width="4" height="3"/><rect x="1078" y="942" width="4" height="3"/><rect x="1087" y="942" width="4" height="3"/></g><path d="M1099 937 H1105 L1102 941 Z" fill="#555"/>
</svg>
<svg class="a" style="left:0;top:1020px" width="1920" height="60" viewBox="0 1020 1920 60"><defs><linearGradient id="sun" x1="0" y1="0" x2="1" y2="1"><stop offset="0" stop-color="#f7b82a"/><stop offset="1" stop-color="#f06a10"/></linearGradient><linearGradient id="win" x1="0" y1="0" x2="1" y2="1"><stop offset="0" stop-color="#3fc3f7"/><stop offset="1" stop-color="#0a72d6"/></linearGradient></defs>
<circle cx="40" cy="1049" r="12.5" fill="url(#sun)"/><circle cx="48.5" cy="1038.5" r="9" fill="#c4281c"/><text x="48.5" y="1043.5" font-family="Liberation Sans" font-size="13" fill="#fff" text-anchor="middle">2</text>
<g fill="url(#win)"><rect x="503" y="1036" width="14" height="14"/><rect x="518.5" y="1036" width="14" height="14"/><rect x="503" y="1051.5" width="14" height="14"/><rect x="518.5" y="1051.5" width="14" height="14"/></g>
<rect x="549.5" y="1031.5" width="272" height="37" rx="18.5" fill="#f9f9f9" stroke="#e2e2e2"/>
<circle cx="570" cy="1049" r="6.5" fill="none" stroke="#222" stroke-width="2"/><path d="M575 1054 L580 1059" stroke="#222" stroke-width="2.2"/>
<path d="M758 1058 L768 1040 L778 1058 Z" fill="#e8cc40"/><path d="M766 1062 L788 1037 L806 1062 Z" fill="#3ebf8a"/><path d="M796 1058 L806 1041 L817 1058 Z" fill="#d040c0"/>
<rect x="839" y="1043" width="21" height="20" fill="#1e1e1e"/><rect x="849" y="1036" width="20" height="20" fill="#d9d9d9" opacity="0.85"/><rect x="849" y="1043" width="11" height="13" fill="#9a9a9a"/>
<path d="M897 1040 Q905 1033 915 1037 L924 1050 Q920 1064 908 1063 L896 1050 Q893 1044 897 1040 Z" fill="#6a74e8"/><path d="M897 1040 Q903 1035 910 1036 L901 1056 Q893 1048 897 1040 Z" fill="#3ab0f0"/><path d="M914 1045 L924 1050 Q921 1063 908 1063 Z" fill="#f07840"/><path d="M906 1046 L915 1045 L912 1054 L903 1055 Z" fill="#f4f4f4"/>
<circle cx="966" cy="1040" r="5" fill="#7b83eb"/><circle cx="973" cy="1042" r="4" fill="#5059c9"/><rect x="960" y="1047" width="18" height="16" rx="5" fill="#5059c9"/><rect x="949" y="1045" width="16" height="16" rx="2" fill="#4b53bc"/><text x="957" y="1058" font-family="Liberation Sans" font-size="11" font-weight="bold" fill="#fff" text-anchor="middle">T</text>
<path d="M1005 1042 Q1010 1033 1020 1036 L1033 1046 Q1030 1058 1020 1057 L1008 1051 Q1003 1047 1005 1042 Z" fill="#8e6ee8"/><path d="M1005 1042 Q1009 1036 1016 1036 L1010 1052 Z" fill="#30b8e8"/><rect x="1014" y="1054" width="21" height="10" rx="2" fill="#111"/><text x="1024.5" y="1062.5" font-family="Liberation Sans" font-size="8.5" font-weight="bold" fill="#fff" text-anchor="middle">M365</text>
<defs><linearGradient id="edg" x1="1" y1="0" x2="0" y2="1"><stop offset="0" stop-color="#5ad46a"/><stop offset="0.45" stop-color="#1fa3d8"/><stop offset="1" stop-color="#0c5bb8"/></linearGradient></defs><circle cx="1073" cy="1050" r="15" fill="url(#edg)"/><path d="M1060 1052 Q1062 1040 1075 1041 Q1084 1043 1084 1050 H1068 Q1068 1060 1080 1062 Q1068 1066 1062 1059 Z" fill="#0b4fa0"/><circle cx="1076" cy="1050" r="4.5" fill="#1f8ad8"/><rect x="1068" y="1069" width="10" height="4" rx="2" fill="#777"/>
<path d="M1114 1038 H1126 L1129 1041 H1144 V1063 H1114 Z" fill="#f2c230"/><rect x="1114" y="1044" width="30" height="19" fill="#fcd45a"/><rect x="1121" y="1056" width="16" height="5" rx="1" fill="#2a7ad0"/><rect x="1124" y="1069" width="10" height="4" rx="2" fill="#777"/>
<path d="M1176 1040 V1036 Q1176 1033 1179 1033 H1188 Q1191 1033 1191 1036 V1040" fill="none" stroke="#2a7ad0" stroke-width="2"/><rect x="1169" y="1039" width="29" height="26" rx="3" fill="#1b5aa8"/><rect x="1177" y="1045" width="6" height="6" fill="#f05030"/><rect x="1184" y="1045" width="6" height="6" fill="#7ac040"/><rect x="1177" y="1052" width="6" height="6" fill="#30a8f0"/><rect x="1184" y="1052" width="6" height="6" fill="#ffc020"/>
<path d="M1230 1044 L1244 1036 L1253 1042 V1063 H1230 Z" fill="#3a9ef0"/><path d="M1236 1048 L1253 1042 V1063 H1236 Z" fill="#72c8f8"/><rect x="1224" y="1047" width="15" height="15" rx="2" fill="#0a5cb8"/><circle cx="1231.5" cy="1054.5" r="4" fill="none" stroke="#fff" stroke-width="2"/>
<path d="M1281 1036 L1294 1042 L1307 1036 V1058 L1294 1065 L1281 1058 Z" fill="#c8282c"/><path d="M1285 1043 L1294 1048 L1303 1043 V1056 L1294 1061 L1285 1056 Z" fill="#eeeeee"/><path d="M1289 1051 L1294 1054 L1299 1051 V1055 L1294 1058 L1289 1055 Z" fill="#c8282c"/><rect x="1289" y="1069" width="10" height="4" rx="2" fill="#777"/>
<path d="M1349 1050 L1336 1042.5 A15 15 0 0 1 1362 1042.5 Z" fill="#db4437"/><path d="M1349 1050 L1362 1042.5 A15 15 0 0 1 1349 1065 Z" fill="#fbbc05"/><path d="M1349 1050 L1349 1065 A15 15 0 0 1 1336 1042.5 Z" fill="#0f9d58"/><circle cx="1349" cy="1050" r="7" fill="#fff"/><circle cx="1349" cy="1050" r="5.4" fill="#4285f4"/><rect x="1344" y="1069" width="10" height="4" rx="2" fill="#777"/>
<rect x="1379.5" y="1026.5" width="47" height="47" rx="5" fill="#f9f9f9" stroke="#e6e6e6"/><rect x="1390" y="1035" width="28" height="30" rx="3" fill="#e8650e"/><rect x="1390" y="1056" width="28" height="9" rx="1" fill="#b04008"/><path d="M1399 1039 H1410 V1043 H1403 V1046 H1409 V1050 H1403 V1054 H1399 Z" fill="#fff"/><text x="1404" y="1063.5" font-family="Liberation Sans" font-size="7" font-weight="bold" fill="#f6c8a0" text-anchor="middle">FUS</text><rect x="1394" y="1070" width="20" height="3" rx="1.5" fill="#1a6fd0"/>
<path d="M1607 1052 L1613.5 1046 L1620 1052" fill="none" stroke="#222" stroke-width="1.6"/>
<path d="M1647 1057 Q1642 1057 1643 1052 Q1644 1047 1649 1048 Q1651 1042 1657 1043 Q1663 1045 1662 1051 Q1664 1056 1659 1057 Z" fill="#aaa" stroke="#333" stroke-width="1.2"/><path d="M1645 1042 L1662 1059" stroke="#222" stroke-width="1.6"/>
<g fill="none" stroke="#222" stroke-width="1.5"><path d="M1685 1048 Q1693 1040 1701 1048"/><path d="M1688 1051 Q1693 1046 1698 1051"/></g><circle cx="1693" cy="1054" r="1.7" fill="#222"/>
<path d="M1714 1047 H1718 L1723 1042 V1058 L1718 1053 H1714 Z" fill="none" stroke="#222" stroke-width="1.4"/><path d="M1726 1046 Q1729 1050 1726 1054 M1729 1043 Q1734 1050 1729 1057" fill="none" stroke="#222" stroke-width="1.3"/>
<rect x="1744" y="1044" width="22" height="12" rx="2" fill="#1f9e2c" stroke="#222" stroke-width="1.3"/><rect x="1766" y="1047.5" width="2" height="5" fill="#222"/><path d="M1757 1039 L1753 1047 H1756 L1754 1052 L1759 1045 H1756 Z" fill="#222"/>
<path d="M1880 1055 Q1880 1044 1886 1042 Q1892 1044 1892 1055 L1894 1057 H1878 Z" fill="#222"/><circle cx="1886" cy="1059" r="2" fill="#222"/><text x="1883" y="1054" font-family="Liberation Sans" font-size="8" font-weight="bold" fill="#eee">z</text><text x="1890" y="1045" font-family="Liberation Sans" font-size="8" font-weight="bold" fill="#222">z</text>
</svg>
<div class="t" style="left:64px;top:1034px;font-size:14px;color:#222">14°C</div>
<div class="t" style="left:64px;top:1053px;font-size:14.5px;color:#555">Sunny</div>
<div class="t" style="left:594px;top:1042px;font-size:16.4px;color:#555">Search</div>
<div class="t" style="left:1765px;width:100px;text-align:right;top:1033px;font-size:14px;color:#222">15:04</div>
<div class="t" style="left:1765px;width:100px;text-align:right;top:1053px;font-size:15.3px;color:#222">04/03/2026</div>
</body></html>
